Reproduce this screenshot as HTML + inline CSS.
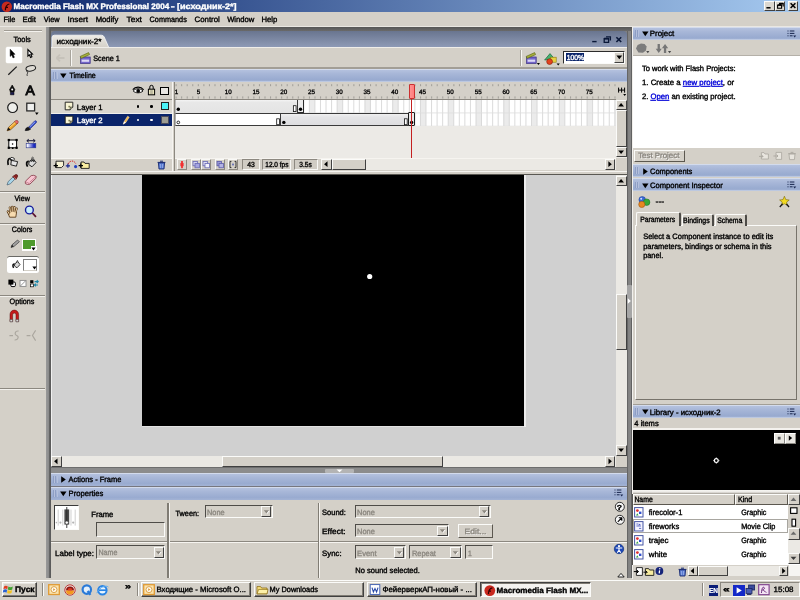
<!DOCTYPE html>
<html><head><meta charset="utf-8"><title>Macromedia Flash MX Professional 2004</title>
<style>
html,body{margin:0;padding:0;background:#d4d0c8;overflow:hidden}
#s{will-change:transform;position:relative;width:800px;height:600px;overflow:hidden;background:#d4d0c8;font-family:"Liberation Sans",sans-serif}
#s div,#s svg{position:absolute;display:block}
#s svg{overflow:visible}
#tx text{white-space:pre;text-rendering:geometricPrecision}
#tx .lk{fill:#0000d8;stroke:#0000d8;text-decoration:underline}
</style></head><body><div id="s">
<div style="left:0px;top:0px;width:800px;height:12.3px;background:linear-gradient(90deg,#0a246a 0%,#a6caf0 100%)"></div>
<svg style="left:1px;top:0.6px" width="12" height="12" viewBox="0 0 12 12"><circle cx="5.8" cy="5.8" r="5.2" fill="#c62a1e"/><path d="M4.4 9.2 C4.4 5.6 5.4 3.6 8.4 3 M4.2 6.3 H7" stroke="#2a0000" stroke-width="1.2" fill="none"/></svg>
<div style="left:764.2px;top:1.4px;width:10.4px;height:9.2px;background:#dcd8d0;border:1px solid #fbfbf9;border-right-color:#404040;border-bottom-color:#404040;box-sizing:border-box;"></div>
<div style="left:774.6px;top:1.4px;width:10.8px;height:9.2px;background:#dcd8d0;border:1px solid #fbfbf9;border-right-color:#404040;border-bottom-color:#404040;box-sizing:border-box;"></div>
<div style="left:788px;top:1.4px;width:10.4px;height:9.2px;background:#dcd8d0;border:1px solid #fbfbf9;border-right-color:#404040;border-bottom-color:#404040;box-sizing:border-box;"></div>
<svg style="left:764.2px;top:1.4px" width="10.4" height="9.2" viewBox="0 0 10.4 9.2"><path d="M2.4 6.8 H6.6" stroke="#000" stroke-width="1.5"/></svg>
<svg style="left:774.6px;top:1.4px" width="10.8" height="9.2" viewBox="0 0 10.8 9.2"><path d="M4.2 2.6 H8.2 V5.6 M2.6 4.2 H6.6 V7.2 H2.6 Z" stroke="#000" stroke-width="1.1" fill="none"/><path d="M4.2 2.4 H8.2 M2.6 4 H6.6" stroke="#000" stroke-width="1.5"/></svg>
<svg style="left:788px;top:1.4px" width="10.4" height="9.2" viewBox="0 0 10.4 9.2"><path d="M2.6 2.2 L7.4 7 M7.4 2.2 L2.6 7" stroke="#000" stroke-width="1.5"/></svg>
<div style="left:0px;top:12.3px;width:800px;height:14.3px;background:#d4d0c8"></div>
<div style="left:0px;top:26px;width:800px;height:1px;background:#e9e7e2"></div>
<div style="left:0px;top:27px;width:46px;height:553px;background:#d4d0c8"></div>
<div style="left:4px;top:30px;width:38px;height:1px;background:#a09c94"></div>
<div style="left:4px;top:31px;width:38px;height:1px;background:#f4f2ee"></div>
<div style="left:5.7px;top:46.7px;width:16.2px;height:16px;background:#fff;border-radius:1.5px;box-shadow:0 0 0 0.5px #e8e6e0"></div>
<svg style="left:0px;top:0px" width="46" height="200" viewBox="0 0 46 200"><path d="M10.2 49.3 V56.4 L11.8 55 L13 57.9 L14.4 57.3 L13.2 54.5 L15 54.3 Z" fill="#000" stroke="#000" stroke-width="0.5" /><path d="M27.9 49.5 V56 L29.4 54.8 L30.6 57.4 L31.9 56.8 L30.8 54.2 L32.5 54 Z" fill="#f4f4f4" stroke="#000" stroke-width="1.1" /><path d="M8.3 74.8 L16.7 66.6" fill="none" stroke="#1c1c1c" stroke-width="1.2" /><ellipse cx="30.8" cy="68.4" rx="4.9" ry="2.6" transform="rotate(-12 30.8 68.4)" fill="#dedbd4" stroke="#222" stroke-width="1"/><path d="M27.2 70.2 C26 71.6 28.6 72.4 27.4 73.6 C26.6 74.4 27.6 75.2 27 76" fill="none" stroke="#222" stroke-width="0.9" /><path d="M12.2 85 L9.6 89.6 L10.4 92 H14 L14.8 89.6 Z" fill="#111" stroke="#000" stroke-width="0.6" /><path d="M10.4 92.2 H14 V94.8 H10.4 Z" fill="#1a1a50" stroke="#000" stroke-width="0.5" /><circle cx="12.2" cy="89.4" r="1" fill="#fff"/><circle cx="12.6" cy="107.6" r="4.9" fill="#eeeeea" stroke="#1a1a1a" stroke-width="1.2"/><rect x="26.8" y="103.2" width="7.8" height="7.7" fill="#f0f0ee" stroke="#2a2a2a" stroke-width="1.3"/><path d="M35 112.6 H38.6 L36.8 114.9 Z" fill="#000" stroke="none" stroke-width="1" /><path d="M7 130.8 L8.4 127.4 L15.4 121 L17.8 123.2 L10.6 129.8 Z" fill="#f2a428" stroke="#6a4210" stroke-width="0.6" /><path d="M7 130.8 L8.4 127.4 L10.6 129.8 Z" fill="#1a1a1a" stroke="none" stroke-width="1" /><path d="M14.6 121.8 L15.8 120.6 Q17 119.8 18 121 Q18.8 122 17.9 123.1 L17 124 Z" fill="#e86a6a" stroke="#7a2a2a" stroke-width="0.5" /><path d="M9.6 127.4 L15.4 122.4" fill="none" stroke="#fbe2a0" stroke-width="0.8" /><path d="M28.6 127.2 L34.6 121 Q35.6 120.2 36.4 121.2 Q37 122 36.2 122.8 L30.4 128.6 Z" fill="#3650d0" stroke="#16227a" stroke-width="0.6" /><path d="M25 130.6 Q25.4 127.8 28 127 L30.6 129.2 Q29 131 25 130.6 Z" fill="#16161c" stroke="#000" stroke-width="0.4" /><path d="M30 126.6 L35 121.8" fill="none" stroke="#c4d0ff" stroke-width="0.7" /><rect x="8.8" y="140" width="7.8" height="7.8" fill="#fff" stroke="#000" stroke-width="1"/><rect x="7.700000000000001" y="138.9" width="2.2" height="2.2" fill="#000"/><rect x="15.500000000000002" y="138.9" width="2.2" height="2.2" fill="#000"/><rect x="7.700000000000001" y="146.70000000000002" width="2.2" height="2.2" fill="#000"/><rect x="15.500000000000002" y="146.70000000000002" width="2.2" height="2.2" fill="#000"/><rect x="11.899999999999999" y="147.39999999999998" width="1.6" height="1.6" fill="#000"/><circle cx="12.6" cy="144" r="0.8" fill="#000"/><defs><linearGradient id="g1" x1="0" x2="1"><stop offset="0.1" stop-color="#fff"/><stop offset="0.8" stop-color="#1a28c0"/></linearGradient></defs><rect x="26.2" y="143.4" width="9.6" height="4.4" fill="url(#g1)" stroke="#28348c" stroke-width="0.6"/><path d="M27 140.7 H35 M28.8 139.2 L26.8 140.7 L28.8 142.2 M33.2 139.2 L35.2 140.7 L33.2 142.2" fill="none" stroke="#1a1a3a" stroke-width="1" /><path d="M11.4 160.4 L17.6 161.6 L16.4 166.2 L10.8 164.8 Z" fill="#e6e6e6" stroke="#111" stroke-width="0.9" /><path d="M11.6 160.6 C9.6 156.4 7 159 8.2 165" fill="none" stroke="#0a0a0a" stroke-width="1.6" /><ellipse cx="12.4" cy="158.8" rx="2.2" ry="1.2" transform="rotate(15 12.4 158.8)" fill="#fff" stroke="#111" stroke-width="0.8"/><path d="M29.4 161.2 L33.2 158.6 L36 162.6 L32 166.8 L28.6 164.4 Z" fill="#dcdcdc" stroke="#111" stroke-width="0.9" /><path d="M28.8 161.6 C26.4 161 26 164 27.6 166.6" fill="none" stroke="#0a0a0a" stroke-width="1.8" /><path d="M31.6 159.4 C31.4 157 33 156.2 33.6 158.2" fill="none" stroke="#444" stroke-width="0.8" /><path d="M30.6 161.6 L33 160.2 L34.2 162" fill="none" stroke="#222" stroke-width="1.2" /><path d="M7 185 L8.2 181.6 L13 177 L15 179 L10.4 183.8 Z" fill="#a8d4e8" stroke="#4a6272" stroke-width="0.7" /><path d="M12.6 176.6 L15.6 174.6 Q17.4 174.2 17.8 176 L16 179.4 Z" fill="#8a2020" stroke="#4a0c0c" stroke-width="0.6" /><path d="M13.6 176.8 L16.2 179.2" fill="none" stroke="#d88" stroke-width="0.7" /><path d="M25.3 181.4 L31.2 175.6 Q33.8 174.6 36.2 176.4 L35.8 178.4 L29.8 184.2 Q27 185 25.4 183.6 Z" fill="#f8c4d0" stroke="#8a4450" stroke-width="0.9" /><path d="M25.4 181.6 Q27.6 182.4 29.8 184 M29.8 182.2 L35.8 176.6" fill="none" stroke="#b06a7a" stroke-width="0.7" /></svg>
<div style="left:0px;top:191.4px;width:45px;height:1px;background:#8c8880"></div>
<div style="left:0px;top:192.4px;width:45px;height:1px;background:#f2f0ec"></div>
<svg style="left:0px;top:200px" width="46" height="150" viewBox="0 200 46 150"><path d="M9.6 217.2 Q8.2 214.6 8.6 212.4 L10.2 210 H15.6 L16.6 212 L15.8 217.2 Z" fill="#f8dcb0" stroke="#4a2a08" stroke-width="0.8" /><path d="M10.4 211.4 L9.8 207.6" fill="none" stroke="#4a2a08" stroke-width="2.2" stroke-linecap="round"/><path d="M12.2 211 L12.2 206.8" fill="none" stroke="#4a2a08" stroke-width="2.2" stroke-linecap="round"/><path d="M14 211 L14.4 207.2" fill="none" stroke="#4a2a08" stroke-width="2.2" stroke-linecap="round"/><path d="M15.6 211.6 L16.6 208.6" fill="none" stroke="#4a2a08" stroke-width="2.2" stroke-linecap="round"/><path d="M9 213.6 L7.8 211.4" fill="none" stroke="#4a2a08" stroke-width="2.2" stroke-linecap="round"/><path d="M10.4 212 L9.8 207.6" fill="none" stroke="#f8dcb0" stroke-width="1.0" stroke-linecap="round"/><path d="M12.2 212 L12.2 206.8" fill="none" stroke="#f8dcb0" stroke-width="1.0" stroke-linecap="round"/><path d="M14 212 L14.4 207.2" fill="none" stroke="#f8dcb0" stroke-width="1.0" stroke-linecap="round"/><path d="M15.6 212.4 L16.6 208.6" fill="none" stroke="#f8dcb0" stroke-width="1.0" stroke-linecap="round"/><path d="M9.4 214.2 L7.8 211.4" fill="none" stroke="#f8dcb0" stroke-width="1.0" stroke-linecap="round"/><circle cx="29.4" cy="210" r="3.9" fill="#c8ecf8" stroke="#181c9c" stroke-width="1.4"/><path d="M32.4 213 L36 216.8" fill="none" stroke="#5a1430" stroke-width="1.8" /><path d="M11 247.4 L12 244.8 L17.6 240 L19.4 241.8 L13.8 246.6 Z" fill="#a2a2a2" stroke="#3a3a3a" stroke-width="0.7" /><path d="M11 247.4 L12 244.8 L13.8 246.6 Z" fill="#222" stroke="none" stroke-width="1" /><rect x="10.8" y="282" width="4.6" height="4.6" rx="1.2" fill="#fff" stroke="#000" stroke-width="1"/><rect x="8.4" y="279.6" width="5" height="5" fill="#000"/><rect x="20" y="280.4" width="6" height="6" fill="#fff" stroke="#8a8a8a" stroke-width="0.9"/><path d="M25.6 280.8 L20.4 286" fill="none" stroke="#8a8a8a" stroke-width="0.9" /><rect x="30.2" y="280.2" width="3.2" height="3" fill="#000"/><rect x="30.4" y="284" width="3" height="2.8" fill="#fff" stroke="#000" stroke-width="0.7"/><path d="M34.6 281.6 H38 M34.6 285 H38 M36.8 280.2 L38.2 281.6 L36.8 283 M35.8 283.6 L34.4 285 L35.8 286.4" fill="none" stroke="#1a86a8" stroke-width="1.1" /><path d="M10 321.6 V314.4 A4.3 4.3 0 0 1 18.6 314.4 V321.6 H16 V314.8 A1.7 1.7 0 0 0 12.6 314.8 V321.6 Z" fill="#c41a1a" stroke="#5a0a0a" stroke-width="0.5" /><path d="M10 319.4 H12.6 V321.8 H10 Z M16 319.4 H18.6 V321.8 H16 Z" fill="#d8d8d8" stroke="#3a3a3a" stroke-width="0.5" /><path d="M9.4 335.6 H13 M18.6 331 C14.6 330.6 14.4 334.6 16.6 335.4 C19.2 336.4 18.4 340.2 14.6 340" fill="none" stroke="#aaa69e" stroke-width="1.1" /><path d="M26.6 335.6 H30.4 M35.6 330.4 L32.4 335.4 L35.6 340.6" fill="none" stroke="#aaa69e" stroke-width="1.1" /></svg>
<div style="left:0px;top:222.6px;width:45px;height:1px;background:#8c8880"></div>
<div style="left:0px;top:223.6px;width:45px;height:1px;background:#f2f0ec"></div>
<div style="left:22.2px;top:238.5px;width:14.3px;height:12px;background:#fff"></div>
<div style="left:23.4px;top:239.7px;width:11.9px;height:9.6px;background:#4e9a2c"></div>
<div style="left:31px;top:246.4px;width:5.5px;height:4.1px;background:#fff"></div>
<svg style="left:31.4px;top:246.8px" width="5" height="4" viewBox="0 0 5 4"><path d="M0.4 0.6 H4.6 L2.5 3.4 Z" fill="#000"/></svg>
<div style="left:6.5px;top:256.3px;width:32.5px;height:16.7px;background:#fff;border-radius:2.5px;border-top:1px solid #6a6a66;box-sizing:border-box"></div>
<svg style="left:9px;top:258px" width="14" height="14" viewBox="0 0 14 14"><path d="M6 5.6 L8.8 3.6 L11 6.6 L8 9.8 L5.4 8 Z" fill="#d8d8d8" stroke="#111" stroke-width="0.8"/><path d="M5.6 6 C3.8 5.6 3.4 7.8 4.6 9.8" stroke="#0a0a0a" stroke-width="1.5" fill="none"/><path d="M7.6 4.2 C7.4 2.4 8.8 2 9.2 3.4" stroke="#333" stroke-width="0.8" fill="none"/></svg>
<div style="left:22.5px;top:259px;width:14.3px;height:11.8px;background:#fff;border:1px solid #808080;border-bottom-color:#d4d0c8;box-sizing:border-box"></div>
<svg style="left:31.6px;top:266.4px" width="5" height="4" viewBox="0 0 5 4"><path d="M0.4 0.6 H4.6 L2.5 3.4 Z" fill="#000"/></svg>
<div style="left:0px;top:295px;width:45px;height:1px;background:#8c8880"></div>
<div style="left:0px;top:296px;width:45px;height:1px;background:#f2f0ec"></div>
<div style="left:0px;top:388px;width:45px;height:1px;background:#8c8880"></div>
<div style="left:0px;top:389px;width:45px;height:1px;background:#f2f0ec"></div>
<div style="left:45.8px;top:26.6px;width:586.4px;height:551px;background:#808080"></div>
<div style="left:45.8px;top:26.6px;width:5.2px;height:551px;background:linear-gradient(90deg,#9a9a9a 0%,#8c8c8c 50%,#606060 72%,#585858 100%)"></div>
<div style="left:50.8px;top:26.6px;width:581.4px;height:4.4px;background:linear-gradient(#555 0%,#6a6a6a 100%)"></div>
<div style="left:626.6px;top:30.8px;width:5.6px;height:546.8px;background:linear-gradient(90deg,#4a4a4a 0%,#808080 20%,#868686 80%,#3e3e3e 100%)"></div>
<div style="left:50.8px;top:30.8px;width:576.4px;height:17px;background:linear-gradient(#69758f,#909cb8);border-radius:4px 4px 0 0"></div>
<svg style="left:51px;top:34px" width="62" height="14" viewBox="0 0 62 14"><defs><linearGradient id="tg" x1="0" x2="0" y1="0" y2="1"><stop offset="0" stop-color="#efede8"/><stop offset="0.5" stop-color="#dedbd4"/><stop offset="1" stop-color="#d4d0c8"/></linearGradient></defs><path d="M1 14 V3.6 Q1 1.2 3.4 1.2 H50.4 Q52.4 1.2 53.2 3 L58 14 Z" fill="url(#tg)" stroke="#f8f8f6" stroke-width="0.8"/></svg>
<svg style="left:590px;top:34px" width="40" height="12" viewBox="0 0 40 12"><path d="M2.2 7.6 H6.6" stroke="#0a1838" stroke-width="1.4"/><path d="M16 2.8 H20.4 V6.4 M14.2 4.6 H18.6 V8.4 H14.2 Z" stroke="#0a1838" stroke-width="1.3" fill="none"/><path d="M14.2 4.6 H18.6" stroke="#0a1838" stroke-width="1.8"/><path d="M26.4 3.2 L31.2 8 M31.2 3.2 L26.4 8" stroke="#0a1838" stroke-width="1.6"/></svg>
<div style="left:50.8px;top:47.2px;width:576.4px;height:21px;background:#d4d0c8"></div>
<div style="left:50.8px;top:47.2px;width:576.4px;height:0.8px;background:#efede9"></div>
<div style="left:50.8px;top:67.4px;width:576.4px;height:1.2px;background:#a29e96"></div>
<svg style="left:55px;top:53px" width="11" height="10" viewBox="0 0 11 10"><path d="M1.5 5 H9.5 M1.5 5 L5 1.6 M1.5 5 L5 8.4" stroke="#c6c2ba" stroke-width="1.8" fill="none"/></svg>
<div style="left:70.4px;top:50px;width:1px;height:16.4px;background:#a8a49c"></div>
<div style="left:71.4px;top:50px;width:1px;height:16.4px;background:#f8f7f4"></div>
<svg style="left:79.4px;top:51.2px" width="13" height="14" viewBox="0 0 13 14"><rect x="1.6" y="6" width="9.6" height="6.4" fill="#7466cc" stroke="#382c82" stroke-width="0.7"/><rect x="2.6" y="8.6" width="7.6" height="2.2" fill="#dcd8f6"/><path d="M1.2 5.4 L9.6 1.6 L10.6 3.6 L2.2 7.4 Z" fill="#a6ae3c" stroke="#56600e" stroke-width="0.6"/></svg>
<div style="left:519.8px;top:50px;width:1px;height:16.4px;background:#a8a49c"></div>
<div style="left:520.8px;top:50px;width:1px;height:16.4px;background:#f8f7f4"></div>
<svg style="left:525.4px;top:51px" width="16" height="15" viewBox="0 0 16 15"><rect x="1.6" y="6" width="9.6" height="6.4" fill="#7466cc" stroke="#382c82" stroke-width="0.7"/><rect x="2.6" y="8.6" width="7.6" height="2.2" fill="#dcd8f6"/><path d="M1.2 5.4 L9.6 1.6 L10.6 3.6 L2.2 7.4 Z" fill="#a6ae3c" stroke="#56600e" stroke-width="0.6"/><path d="M11.8 12 H15 L13.4 14 Z" fill="#000"/></svg>
<svg style="left:543.4px;top:51px" width="17" height="15" viewBox="0 0 17 15"><path d="M1.6 9 L7 2.6 L11.6 8 Z" fill="#46b070" stroke="#1a6a3a" stroke-width="0.7"/><rect x="7.4" y="6.2" width="5.8" height="5" fill="#e8d242" stroke="#8a7a10" stroke-width="0.6"/><circle cx="6.6" cy="10.6" r="2.9" fill="#e2421e" stroke="#801a0a" stroke-width="0.6"/><path d="M13.6 12.4 H16.8 L15.2 14.4 Z" fill="#000"/></svg>
<div style="left:563px;top:51px;width:62px;height:13.2px;background:#fff;border:1.6px solid #2c2c2c;border-right-color:#fbfbf9;border-bottom-color:#fbfbf9;box-sizing:border-box"></div>
<div style="left:566.4px;top:53.2px;width:17.8px;height:8.2px;background:#0a246a"></div>
<div style="left:614px;top:52.4px;width:10px;height:10.8px;background:#d4d0c8;border:1px solid #fbfbf9;border-right-color:#404040;border-bottom-color:#404040;box-sizing:border-box;"></div>
<svg style="left:615.6px;top:55.4px" width="7" height="5" viewBox="0 0 7 5"><path d="M0.4 0.6 H6.2 L3.3 4.2 Z" fill="#000"/></svg>
<div style="left:50.8px;top:68.7px;width:576.4px;height:13.3px;background:linear-gradient(#b7c4e0 0%,#a8b7d8 35%,#99abd0 80%,#a3b3d5 100%)"></div>
<div style="left:50.8px;top:68.7px;width:576.4px;height:0.9px;background:#d3dbec"></div>
<div style="left:50.8px;top:81.1px;width:576.4px;height:0.9px;background:#bcc8e0"></div>
<div style="left:52.8px;top:71.8px;width:1.1px;height:7.0px;background:#8e9ec4"></div>
<div style="left:53.9px;top:71.8px;width:1px;height:7.0px;background:#b4c0dc"></div>
<div style="left:55.4px;top:71.8px;width:1.1px;height:7.0px;background:#8e9ec4"></div>
<div style="left:56.5px;top:71.8px;width:1px;height:7.0px;background:#b4c0dc"></div>
<svg style="left:59.8px;top:72.8px" width="8" height="7" viewBox="0 0 8 7"><path d="M0.1 0.6 H6.5 L3.3 5.2 Z" fill="#000"/></svg>
<div style="left:50.8px;top:81.8px;width:576.4px;height:93.4px;background:#d4d0c8"></div>
<div style="left:50.8px;top:98.8px;width:121.4px;height:1px;background:#8c8880"></div>
<svg style="left:132px;top:85px" width="13" height="11" viewBox="0 0 13 11"><path d="M1.2 6 C3.6 3 8.4 3 11 6 C8.4 8.4 3.6 8.4 1.2 6 Z" fill="#fff" stroke="#000" stroke-width="0.9"/><circle cx="6.2" cy="5.9" r="1.9" fill="#000"/><path d="M0.8 4.6 C3.4 1.4 8.8 1.4 11.6 4.8" stroke="#000" stroke-width="1.3" fill="none"/></svg>
<svg style="left:147px;top:84px" width="9" height="12" viewBox="0 0 9 12"><rect x="1.4" y="5.2" width="6.2" height="5.6" fill="#e8e4c0" stroke="#000" stroke-width="1"/><path d="M2.8 5 V3 A1.7 1.7 0 0 1 6.2 3 V5" stroke="#000" stroke-width="1" fill="none"/><path d="M3.2 7 H5.8 M3.2 9 H5.8" stroke="#555" stroke-width="0.6"/></svg>
<div style="left:160.4px;top:86.6px;width:8.4px;height:8px;background:#e8e6e2;border:1.3px solid #000;box-sizing:border-box"></div>
<div style="left:50.8px;top:99.8px;width:121.4px;height:13.2px;background:#dad7d0"></div>
<div style="left:50.8px;top:113px;width:121.4px;height:0.8px;background:#f0efec"></div>
<div style="left:50.8px;top:113.8px;width:121.4px;height:12.4px;background:#0a246a"></div>
<svg style="left:64px;top:101.2px" width="10" height="10" viewBox="0 0 10 10"><path d="M1.2 1.2 H8.8 V6.2 L6.2 8.8 H1.2 Z" fill="#f8f4d4" stroke="#1a1a1a" stroke-width="0.9"/><path d="M8.8 6.2 H6.2 V8.8" fill="#d8d4a8" stroke="#1a1a1a" stroke-width="0.7"/><rect x="4.4" y="4.8" width="1.8" height="1.6" fill="#7a7a50"/></svg>
<svg style="left:64px;top:114.6px" width="10" height="10" viewBox="0 0 10 10"><path d="M1.2 1.2 H8.8 V6.2 L6.2 8.8 H1.2 Z" fill="#f8f4d4" stroke="#1a1a1a" stroke-width="0.9"/><path d="M8.8 6.2 H6.2 V8.8" fill="#d8d4a8" stroke="#1a1a1a" stroke-width="0.7"/><rect x="4.4" y="4.8" width="1.8" height="1.6" fill="#7a7a50"/></svg>
<svg style="left:122px;top:114.6px" width="8" height="10" viewBox="0 0 8 10"><path d="M1.2 9.2 L2.2 6.4 L5.6 1.2 L7.2 2.2 L3.8 7.6 Z" fill="#f4b848" stroke="#fce8c0" stroke-width="0.5"/><path d="M1.2 9.2 L2.2 6.4 L3.8 7.6 Z" fill="#fff"/></svg>
<div style="left:136.9px;top:105.4px;width:2.6px;height:2.6px;background:#000;border-radius:50%"></div>
<div style="left:136.9px;top:118.6px;width:2.6px;height:2.6px;background:#fff;border-radius:50%"></div>
<div style="left:150.1px;top:105.4px;width:2.6px;height:2.6px;background:#000;border-radius:50%"></div>
<div style="left:150.1px;top:118.6px;width:2.6px;height:2.6px;background:#fff;border-radius:50%"></div>
<div style="left:160.6px;top:102.4px;width:8px;height:8px;background:#4cf2f6;border:1px solid #222;box-sizing:border-box"></div>
<div style="left:160.6px;top:115.8px;width:8px;height:8px;background:#9c9c92;border:1px solid #4a4a5a;box-sizing:border-box"></div>
<div style="left:50.8px;top:126.2px;width:121.4px;height:32px;background:#eceae6"></div>
<div style="left:50.8px;top:158px;width:121.4px;height:13px;background:#d4d0c8"></div>
<div style="left:50.8px;top:158px;width:121.4px;height:0.8px;background:#f6f4f0"></div>
<svg style="left:53px;top:159.2px" width="12" height="11" viewBox="0 0 12 11"><path d="M3 2.2 H10.6 V6.4 L8.4 8.6 H3 Z" fill="#f8f4d4" stroke="#1a1a1a" stroke-width="0.9"/><path d="M0.6 6.6 H5 M2.8 4.4 V8.8" stroke="#000" stroke-width="1.2"/></svg>
<svg style="left:65px;top:159.2px" width="13" height="11" viewBox="0 0 13 11"><path d="M3 5 C5 1 9 1 11 5" stroke="#d42020" stroke-width="1" stroke-dasharray="1.5 1" fill="none"/><circle cx="10.6" cy="7.6" r="1.6" fill="#2040c0"/><path d="M0.8 6.8 H5 M2.9 4.8 V8.8" stroke="#1a2a90" stroke-width="1.2"/></svg>
<svg style="left:78px;top:159.2px" width="13" height="11" viewBox="0 0 13 11"><path d="M3 3 H6 L7 4.4 H11.2 V9.4 H3 Z" fill="#f8eca0" stroke="#1a1a1a" stroke-width="0.9"/><path d="M0.6 6.6 H5 M2.8 4.4 V8.8" stroke="#000" stroke-width="1.2"/></svg>
<svg style="left:156px;top:159px" width="11" height="11" viewBox="0 0 11 11"><path d="M2.4 3.8 H8.6 L8 10 H3 Z" fill="#5a7cd2" stroke="#1a2a70" stroke-width="0.9"/><path d="M1.6 3.4 H9.4 M4 2.2 H7" stroke="#1a2a70" stroke-width="1"/><path d="M4.4 5 V9 M6.6 5 V9" stroke="#a8bcf0" stroke-width="0.7"/></svg>
<div style="left:172.2px;top:81.8px;width:1px;height:89.4px;background:#f6f4f0"></div>
<div style="left:174.4px;top:81.8px;width:1px;height:89.4px;background:#8c8880"></div>
<svg style="left:175.6px;top:82px" width="441" height="17" viewBox="0 0 441 17"><path d="M0.1 2.2 V4.2 M0.1 14.4 V16.6 M5.66 2.2 V4.2 M5.66 14.4 V16.6 M11.21 2.2 V4.2 M11.21 14.4 V16.6 M16.77 2.2 V4.2 M16.77 14.4 V16.6 M22.32 2.2 V4.2 M22.32 14.4 V16.6 M27.88 2.2 V4.2 M27.88 14.4 V16.6 M33.43 2.2 V4.2 M33.43 14.4 V16.6 M38.99 2.2 V4.2 M38.99 14.4 V16.6 M44.54 2.2 V4.2 M44.54 14.4 V16.6 M50.1 2.2 V4.2 M50.1 14.4 V16.6 M55.66 2.2 V4.2 M55.66 14.4 V16.6 M61.21 2.2 V4.2 M61.21 14.4 V16.6 M66.77 2.2 V4.2 M66.77 14.4 V16.6 M72.32 2.2 V4.2 M72.32 14.4 V16.6 M77.88 2.2 V4.2 M77.88 14.4 V16.6 M83.43 2.2 V4.2 M83.43 14.4 V16.6 M88.99 2.2 V4.2 M88.99 14.4 V16.6 M94.55 2.2 V4.2 M94.55 14.4 V16.6 M100.1 2.2 V4.2 M100.1 14.4 V16.6 M105.66 2.2 V4.2 M105.66 14.4 V16.6 M111.21 2.2 V4.2 M111.21 14.4 V16.6 M116.77 2.2 V4.2 M116.77 14.4 V16.6 M122.32 2.2 V4.2 M122.32 14.4 V16.6 M127.88 2.2 V4.2 M127.88 14.4 V16.6 M133.43 2.2 V4.2 M133.43 14.4 V16.6 M138.99 2.2 V4.2 M138.99 14.4 V16.6 M144.55 2.2 V4.2 M144.55 14.4 V16.6 M150.1 2.2 V4.2 M150.1 14.4 V16.6 M155.66 2.2 V4.2 M155.66 14.4 V16.6 M161.21 2.2 V4.2 M161.21 14.4 V16.6 M166.77 2.2 V4.2 M166.77 14.4 V16.6 M172.32 2.2 V4.2 M172.32 14.4 V16.6 M177.88 2.2 V4.2 M177.88 14.4 V16.6 M183.43 2.2 V4.2 M183.43 14.4 V16.6 M188.99 2.2 V4.2 M188.99 14.4 V16.6 M194.55 2.2 V4.2 M194.55 14.4 V16.6 M200.1 2.2 V4.2 M200.1 14.4 V16.6 M205.66 2.2 V4.2 M205.66 14.4 V16.6 M211.21 2.2 V4.2 M211.21 14.4 V16.6 M216.77 2.2 V4.2 M216.77 14.4 V16.6 M222.32 2.2 V4.2 M222.32 14.4 V16.6 M227.88 2.2 V4.2 M227.88 14.4 V16.6 M233.44 2.2 V4.2 M233.44 14.4 V16.6 M238.99 2.2 V4.2 M238.99 14.4 V16.6 M244.55 2.2 V4.2 M244.55 14.4 V16.6 M250.1 2.2 V4.2 M250.1 14.4 V16.6 M255.66 2.2 V4.2 M255.66 14.4 V16.6 M261.21 2.2 V4.2 M261.21 14.4 V16.6 M266.77 2.2 V4.2 M266.77 14.4 V16.6 M272.32 2.2 V4.2 M272.32 14.4 V16.6 M277.88 2.2 V4.2 M277.88 14.4 V16.6 M283.44 2.2 V4.2 M283.44 14.4 V16.6 M288.99 2.2 V4.2 M288.99 14.4 V16.6 M294.55 2.2 V4.2 M294.55 14.4 V16.6 M300.1 2.2 V4.2 M300.1 14.4 V16.6 M305.66 2.2 V4.2 M305.66 14.4 V16.6 M311.21 2.2 V4.2 M311.21 14.4 V16.6 M316.77 2.2 V4.2 M316.77 14.4 V16.6 M322.32 2.2 V4.2 M322.32 14.4 V16.6 M327.88 2.2 V4.2 M327.88 14.4 V16.6 M333.44 2.2 V4.2 M333.44 14.4 V16.6 M338.99 2.2 V4.2 M338.99 14.4 V16.6 M344.55 2.2 V4.2 M344.55 14.4 V16.6 M350.1 2.2 V4.2 M350.1 14.4 V16.6 M355.66 2.2 V4.2 M355.66 14.4 V16.6 M361.21 2.2 V4.2 M361.21 14.4 V16.6 M366.77 2.2 V4.2 M366.77 14.4 V16.6 M372.33 2.2 V4.2 M372.33 14.4 V16.6 M377.88 2.2 V4.2 M377.88 14.4 V16.6 M383.44 2.2 V4.2 M383.44 14.4 V16.6 M388.99 2.2 V4.2 M388.99 14.4 V16.6 M394.55 2.2 V4.2 M394.55 14.4 V16.6 M400.1 2.2 V4.2 M400.1 14.4 V16.6 M405.66 2.2 V4.2 M405.66 14.4 V16.6 M411.21 2.2 V4.2 M411.21 14.4 V16.6 M416.77 2.2 V4.2 M416.77 14.4 V16.6 M422.33 2.2 V4.2 M422.33 14.4 V16.6 M427.88 2.2 V4.2 M427.88 14.4 V16.6 M433.44 2.2 V4.2 M433.44 14.4 V16.6 M438.99 2.2 V4.2 M438.99 14.4 V16.6 " stroke="#8a8884" stroke-width="0.7" fill="none"/></svg>
<div style="left:175.4px;top:98.8px;width:441px;height:1px;background:#8c8880"></div>
<div style="left:175.4px;top:99.8px;width:441px;height:26.4px;background:#fff"></div>
<svg style="left:175.6px;top:99.8px" width="440.8" height="26.4" viewBox="0 0 440.8 26.4"><rect x="22.22" y="0" width="5.56" height="26.4" fill="#ebebeb"/><rect x="50.0" y="0" width="5.56" height="26.4" fill="#ebebeb"/><rect x="77.78" y="0" width="5.56" height="26.4" fill="#ebebeb"/><rect x="105.56" y="0" width="5.56" height="26.4" fill="#ebebeb"/><rect x="133.33" y="0" width="5.56" height="26.4" fill="#ebebeb"/><rect x="161.11" y="0" width="5.56" height="26.4" fill="#ebebeb"/><rect x="188.89" y="0" width="5.56" height="26.4" fill="#ebebeb"/><rect x="216.67" y="0" width="5.56" height="26.4" fill="#ebebeb"/><rect x="244.45" y="0" width="5.56" height="26.4" fill="#ebebeb"/><rect x="272.22" y="0" width="5.56" height="26.4" fill="#ebebeb"/><rect x="300.0" y="0" width="5.56" height="26.4" fill="#ebebeb"/><rect x="327.78" y="0" width="5.56" height="26.4" fill="#ebebeb"/><rect x="355.56" y="0" width="5.56" height="26.4" fill="#ebebeb"/><rect x="383.34" y="0" width="5.56" height="26.4" fill="#ebebeb"/><rect x="411.11" y="0" width="5.56" height="26.4" fill="#ebebeb"/><rect x="438.89" y="0" width="5.56" height="26.4" fill="#ebebeb"/><path d="M0.0 0 V26.4 M5.56 0 V26.4 M11.11 0 V26.4 M16.67 0 V26.4 M22.22 0 V26.4 M27.78 0 V26.4 M33.33 0 V26.4 M38.89 0 V26.4 M44.44 0 V26.4 M50.0 0 V26.4 M55.56 0 V26.4 M61.11 0 V26.4 M66.67 0 V26.4 M72.22 0 V26.4 M77.78 0 V26.4 M83.33 0 V26.4 M88.89 0 V26.4 M94.45 0 V26.4 M100.0 0 V26.4 M105.56 0 V26.4 M111.11 0 V26.4 M116.67 0 V26.4 M122.22 0 V26.4 M127.78 0 V26.4 M133.33 0 V26.4 M138.89 0 V26.4 M144.45 0 V26.4 M150.0 0 V26.4 M155.56 0 V26.4 M161.11 0 V26.4 M166.67 0 V26.4 M172.22 0 V26.4 M177.78 0 V26.4 M183.33 0 V26.4 M188.89 0 V26.4 M194.45 0 V26.4 M200.0 0 V26.4 M205.56 0 V26.4 M211.11 0 V26.4 M216.67 0 V26.4 M222.22 0 V26.4 M227.78 0 V26.4 M233.34 0 V26.4 M238.89 0 V26.4 M244.45 0 V26.4 M250.0 0 V26.4 M255.56 0 V26.4 M261.11 0 V26.4 M266.67 0 V26.4 M272.22 0 V26.4 M277.78 0 V26.4 M283.34 0 V26.4 M288.89 0 V26.4 M294.45 0 V26.4 M300.0 0 V26.4 M305.56 0 V26.4 M311.11 0 V26.4 M316.67 0 V26.4 M322.22 0 V26.4 M327.78 0 V26.4 M333.34 0 V26.4 M338.89 0 V26.4 M344.45 0 V26.4 M350.0 0 V26.4 M355.56 0 V26.4 M361.11 0 V26.4 M366.67 0 V26.4 M372.23 0 V26.4 M377.78 0 V26.4 M383.34 0 V26.4 M388.89 0 V26.4 M394.45 0 V26.4 M400.0 0 V26.4 M405.56 0 V26.4 M411.11 0 V26.4 M416.67 0 V26.4 M422.23 0 V26.4 M427.78 0 V26.4 M433.34 0 V26.4 M438.89 0 V26.4 " stroke="#d2d2d2" stroke-width="0.8" fill="none"/><path d="M0 12.9 H441 M0 26.2 H441" stroke="#dedede" stroke-width="0.8"/></svg>
<div style="left:175.2px;top:99.8px;width:122.62px;height:13px;background:linear-gradient(#f4f4f4 0%,#e8e8e8 18%,#e4e4e4 100%);box-sizing:border-box;border-left:0.9px solid #b8b8b8;border-right:0.9px solid #3a3a3a"></div>
<div style="left:297.82px;top:99.8px;width:5.76px;height:13.4px;background:#ececec;border-right:0.9px solid #2a2a2a;border-bottom:0.9px solid #2a2a2a;box-sizing:border-box"></div>
<div style="left:175.2px;top:112.5px;width:105.96px;height:13.6px;background:#fff;border:0.9px solid #3a3a3a;border-left-color:#b0b0b0;box-sizing:border-box"></div>
<div style="left:281.16px;top:112.5px;width:127.78px;height:13.6px;background:linear-gradient(#f0f0f0 0%,#e4e4e6 30%,#dedee0 100%);border:0.9px solid #3a3a3a;border-left:none;box-sizing:border-box"></div>
<div style="left:408.44px;top:112.2px;width:6.46px;height:14.1px;background:#eaeaea;border:1px solid #1a1a1a;border-radius:1px;box-sizing:border-box"></div>
<svg style="left:0px;top:0px" width="800" height="130" viewBox="0 0 800 130"><circle cx="178.3" cy="109.2" r="1.7" fill="#000"/><rect x="293.37" y="105.7" width="2.7" height="5.9" fill="#fff" stroke="#111" stroke-width="0.8"/><circle cx="300.52" cy="109.2" r="1.7" fill="#000"/><circle cx="178.3" cy="122.4" r="1.35" fill="#fff" stroke="#000" stroke-width="0.8"/><rect x="276.7" y="118.8" width="2.7" height="5.9" fill="#fff" stroke="#111" stroke-width="0.8"/><circle cx="283.86" cy="122.4" r="1.7" fill="#000"/><rect x="404.48" y="118.8" width="2.7" height="5.9" fill="#fff" stroke="#111" stroke-width="0.8"/><circle cx="411.64" cy="122.4" r="1.7" fill="#000"/></svg>
<div style="left:175.4px;top:126.3px;width:441px;height:31.7px;background:#eceae6"></div>
<div style="left:408.5px;top:84.2px;width:6.3px;height:14.8px;background:linear-gradient(90deg,#ff9090,#ff7c7c);border:0.9px solid #cc3030;border-radius:1px;box-sizing:border-box"></div>
<div style="left:411px;top:98.6px;width:1px;height:59.6px;background:#c42020"></div>
<div style="left:616.4px;top:81.8px;width:10.8px;height:89.4px;background:#d4d0c8"></div>
<svg style="left:617px;top:84.6px" width="10" height="12" viewBox="0 0 10 12"><path d="M1.6 2.6 V7.6 M4.6 2.6 V7.6 M7.6 2.6 V7.6 M1.6 5.1 H7.6" stroke="#000" stroke-width="1"/><path d="M6.2 9 H9.2 L7.7 11 Z" fill="#000"/></svg>
<div style="left:616.4px;top:99.8px;width:10.8px;height:58px;background:#ebe9e4"></div>
<div style="left:616.4px;top:99.8px;width:10.8px;height:10.6px;background:#d4d0c8;border:1px solid #fbfbf9;border-right-color:#404040;border-bottom-color:#404040;box-sizing:border-box;"></div>
<svg style="left:616.4px;top:99.8px" width="10.8" height="10.6" viewBox="0 0 10.8 10.6"><path d="M2.2000000000000006 6.5 H8.0 L5.1000000000000005 3.1 Z" fill="#000"/></svg>
<div style="left:616.4px;top:110.4px;width:10.8px;height:36.2px;background:#d4d0c8;border:1px solid #fbfbf9;border-right-color:#404040;border-bottom-color:#404040;box-sizing:border-box;"></div>
<div style="left:616.4px;top:146.6px;width:10.8px;height:10.8px;background:#d4d0c8;border:1px solid #fbfbf9;border-right-color:#404040;border-bottom-color:#404040;box-sizing:border-box;"></div>
<svg style="left:616.4px;top:146.6px" width="10.8" height="10.8" viewBox="0 0 10.8 10.8"><path d="M2.2000000000000006 3.6000000000000005 H8.0 L5.1000000000000005 7.0 Z" fill="#000"/></svg>
<div style="left:175.4px;top:158px;width:441px;height:13.2px;background:#d4d0c8"></div>
<div style="left:175.4px;top:158px;width:441px;height:0.8px;background:#f6f4f0"></div>
<div style="left:176.6px;top:159px;width:10px;height:11.2px;border:1px solid #f8f8f6;border-right-color:#8c8880;border-bottom-color:#8c8880;box-sizing:border-box"></div>
<svg style="left:176.6px;top:159px" width="10" height="11.2" viewBox="0 0 10 11.2"><rect x="4.1" y="2" width="1.8" height="7.2" fill="#f23030"/><rect x="3.4" y="4" width="3.2" height="3.2" fill="#f23030"/></svg>
<div style="left:191px;top:159px;width:10px;height:11.2px;border:1px solid #f8f8f6;border-right-color:#8c8880;border-bottom-color:#8c8880;box-sizing:border-box"></div>
<svg style="left:191px;top:159px" width="10" height="11.2" viewBox="0 0 10 11.2"><rect x="2" y="2.4" width="4.4" height="4.4" fill="#d4d4f0" stroke="#6a6ab4" stroke-width="0.8"/><rect x="4" y="4.4" width="4.4" height="4.4" fill="#a4a4e0" stroke="#6a6ab4" stroke-width="0.8"/></svg>
<div style="left:201.4px;top:159px;width:10px;height:11.2px;border:1px solid #f8f8f6;border-right-color:#8c8880;border-bottom-color:#8c8880;box-sizing:border-box"></div>
<svg style="left:201.4px;top:159px" width="10" height="11.2" viewBox="0 0 10 11.2"><rect x="2" y="2.4" width="4.4" height="4.4" fill="#e0e0f4" stroke="#6a6ab4" stroke-width="0.8"/><rect x="4" y="4.4" width="4.4" height="4.4" fill="#f4f4fc" stroke="#6a6ab4" stroke-width="0.8"/></svg>
<div style="left:215px;top:159px;width:10px;height:11.2px;border:1px solid #f8f8f6;border-right-color:#8c8880;border-bottom-color:#8c8880;box-sizing:border-box"></div>
<svg style="left:215px;top:159px" width="10" height="11.2" viewBox="0 0 10 11.2"><rect x="2" y="2.4" width="4.4" height="4.4" fill="#9c9cd8" stroke="#5a5aa8" stroke-width="0.8"/><rect x="4" y="4.4" width="4.4" height="4.4" fill="#b4b4e4" stroke="#5a5aa8" stroke-width="0.8"/></svg>
<div style="left:228px;top:159px;width:10px;height:11.2px;border:1px solid #f8f8f6;border-right-color:#8c8880;border-bottom-color:#8c8880;box-sizing:border-box"></div>
<svg style="left:228px;top:159px" width="10" height="11.2" viewBox="0 0 10 11.2"><path d="M3.4 2.4 H2 V8.6 H3.4 M6.6 2.4 H8 V8.6 H6.6" stroke="#222" stroke-width="0.9" fill="none"/><rect x="4.3" y="4.6" width="1.4" height="1.8" fill="#4050b0"/></svg>
<div style="left:242px;top:158.8px;width:17.6px;height:11.4px;background:#d0ccc4;border:1px solid #8c8880;border-right-color:#f8f8f6;border-bottom-color:#f8f8f6;box-sizing:border-box"></div>
<div style="left:262px;top:158.8px;width:29px;height:11.4px;background:#d0ccc4;border:1px solid #8c8880;border-right-color:#f8f8f6;border-bottom-color:#f8f8f6;box-sizing:border-box"></div>
<div style="left:294px;top:158.8px;width:24px;height:11.4px;background:#d0ccc4;border:1px solid #8c8880;border-right-color:#f8f8f6;border-bottom-color:#f8f8f6;box-sizing:border-box"></div>
<div style="left:321px;top:159px;width:295.4px;height:11px;background:#ebe9e4"></div>
<div style="left:321px;top:159px;width:10.6px;height:11px;background:#d4d0c8;border:1px solid #fbfbf9;border-right-color:#404040;border-bottom-color:#404040;box-sizing:border-box;"></div>
<svg style="left:321px;top:159px" width="10.6" height="11" viewBox="0 0 10.6 11"><path d="M6.5 2.3000000000000003 V8.1 L3.1 5.2 Z" fill="#000"/></svg>
<div style="left:331.6px;top:159px;width:34.6px;height:11px;background:#d4d0c8;border:1px solid #fbfbf9;border-right-color:#404040;border-bottom-color:#404040;box-sizing:border-box;"></div>
<div style="left:604.6px;top:159px;width:10.4px;height:11px;background:#d4d0c8;border:1px solid #fbfbf9;border-right-color:#404040;border-bottom-color:#404040;box-sizing:border-box;"></div>
<svg style="left:604.6px;top:159px" width="10.4" height="11" viewBox="0 0 10.4 11"><path d="M3.4000000000000004 2.3000000000000003 V8.1 L6.800000000000001 5.2 Z" fill="#000"/></svg>
<div style="left:50.8px;top:171.2px;width:576.4px;height:0.8px;background:#f6f4f0"></div>
<div style="left:50.8px;top:174.2px;width:576.4px;height:1.2px;background:#5a5852"></div>
<div style="left:50.8px;top:175.4px;width:565.6px;height:280.6px;background:#d0d0d0"></div>
<div style="left:50.8px;top:175.4px;width:1.2px;height:280.6px;background:#f0f0f0"></div>
<div style="left:142px;top:175.4px;width:382.4px;height:250.6px;background:#000"></div>
<div style="left:524.4px;top:175.4px;width:1.2px;height:251.6px;background:#ededed"></div>
<div style="left:142px;top:426px;width:382.4px;height:1px;background:#e2e2e2"></div>
<svg style="left:364px;top:271px" width="12" height="12" viewBox="0 0 12 12"><circle cx="5.7" cy="5.5" r="2.6" fill="#fff"/></svg>
<div style="left:616.4px;top:175.4px;width:10.8px;height:280.6px;background:#ebe9e4"></div>
<div style="left:616.4px;top:175.6px;width:10.8px;height:10.6px;background:#d4d0c8;border:1px solid #fbfbf9;border-right-color:#404040;border-bottom-color:#404040;box-sizing:border-box;"></div>
<svg style="left:616.4px;top:175.6px" width="10.8" height="10.6" viewBox="0 0 10.8 10.6"><path d="M2.2000000000000006 6.5 H8.0 L5.1000000000000005 3.1 Z" fill="#000"/></svg>
<div style="left:616.4px;top:445px;width:10.8px;height:10.8px;background:#d4d0c8;border:1px solid #fbfbf9;border-right-color:#404040;border-bottom-color:#404040;box-sizing:border-box;"></div>
<svg style="left:616.4px;top:445px" width="10.8" height="10.8" viewBox="0 0 10.8 10.8"><path d="M2.2000000000000006 3.6000000000000005 H8.0 L5.1000000000000005 7.0 Z" fill="#000"/></svg>
<div style="left:616.4px;top:294px;width:10.8px;height:55.6px;background:#d4d0c8;border:1px solid #fbfbf9;border-right-color:#404040;border-bottom-color:#404040;box-sizing:border-box;"></div>
<div style="left:50.8px;top:456px;width:576.4px;height:11.4px;background:#ebe9e4"></div>
<div style="left:51.4px;top:456px;width:10.6px;height:11.2px;background:#d4d0c8;border:1px solid #fbfbf9;border-right-color:#404040;border-bottom-color:#404040;box-sizing:border-box;"></div>
<svg style="left:51.4px;top:456px" width="10.6" height="11.2" viewBox="0 0 10.6 11.2"><path d="M6.5 2.4 V8.2 L3.1 5.3 Z" fill="#000"/></svg>
<div style="left:222.4px;top:456px;width:220.6px;height:11.2px;background:#d4d0c8;border:1px solid #fbfbf9;border-right-color:#404040;border-bottom-color:#404040;box-sizing:border-box;"></div>
<div style="left:604.6px;top:456px;width:10.6px;height:11.2px;background:#d4d0c8;border:1px solid #fbfbf9;border-right-color:#404040;border-bottom-color:#404040;box-sizing:border-box;"></div>
<svg style="left:604.6px;top:456px" width="10.6" height="11.2" viewBox="0 0 10.6 11.2"><path d="M3.5 2.4 V8.2 L6.9 5.3 Z" fill="#000"/></svg>
<div style="left:616px;top:456px;width:11.2px;height:11.4px;background:#d4d0c8"></div>
<div style="left:50.8px;top:467.4px;width:576.4px;height:6px;background:#8c8c8c"></div>
<div style="left:50.8px;top:467.4px;width:576.4px;height:0.8px;background:#6e6e6e"></div>
<div style="left:324.6px;top:468.6px;width:29.6px;height:4px;background:#b4b4b4;border-radius:1px"></div>
<svg style="left:336.4px;top:469.2px" width="7" height="4" viewBox="0 0 7 4"><path d="M0.5 0.5 H6.5 L3.5 3.3 Z" fill="#fff"/></svg>
<div style="left:627.2px;top:284.6px;width:4.4px;height:33.8px;background:#a6a6a6;border-radius:1px"></div>
<svg style="left:627.4px;top:298.4px" width="4" height="6" viewBox="0 0 4 6"><path d="M0.8 0.2 L3.8 3 L0.8 5.8 Z" fill="#fff"/></svg>
<div style="left:50.8px;top:472.9px;width:576.4px;height:13.5px;background:linear-gradient(#b7c4e0 0%,#a8b7d8 35%,#99abd0 80%,#a3b3d5 100%)"></div>
<div style="left:50.8px;top:472.9px;width:576.4px;height:0.9px;background:#d3dbec"></div>
<div style="left:50.8px;top:485.5px;width:576.4px;height:0.9px;background:#bcc8e0"></div>
<div style="left:52.8px;top:476.0px;width:1.1px;height:7.2px;background:#8e9ec4"></div>
<div style="left:53.9px;top:476.0px;width:1px;height:7.2px;background:#b4c0dc"></div>
<div style="left:55.4px;top:476.0px;width:1.1px;height:7.2px;background:#8e9ec4"></div>
<div style="left:56.5px;top:476.0px;width:1px;height:7.2px;background:#b4c0dc"></div>
<svg style="left:61.1px;top:476.2px" width="7" height="8" viewBox="0 0 7 8"><path d="M0.2 0.2 V6.8 L4.8 3.5 Z" fill="#000"/></svg>
<div style="left:50.8px;top:486.2px;width:576.4px;height:0.8px;background:#77777f"></div>
<div style="left:50.8px;top:486.7px;width:576.4px;height:13.7px;background:linear-gradient(#b7c4e0 0%,#a8b7d8 35%,#99abd0 80%,#a3b3d5 100%)"></div>
<div style="left:50.8px;top:486.7px;width:576.4px;height:0.9px;background:#d3dbec"></div>
<div style="left:50.8px;top:499.5px;width:576.4px;height:0.9px;background:#bcc8e0"></div>
<div style="left:52.8px;top:489.8px;width:1.1px;height:7.4px;background:#8e9ec4"></div>
<div style="left:53.9px;top:489.8px;width:1px;height:7.4px;background:#b4c0dc"></div>
<div style="left:55.4px;top:489.8px;width:1.1px;height:7.4px;background:#8e9ec4"></div>
<div style="left:56.5px;top:489.8px;width:1px;height:7.4px;background:#b4c0dc"></div>
<svg style="left:59.8px;top:490.8px" width="8" height="7" viewBox="0 0 8 7"><path d="M0.1 0.6 H6.5 L3.3 5.2 Z" fill="#000"/></svg>
<svg style="left:614.0px;top:489.4px" width="10" height="8" viewBox="0 0 10 8"><path d="M0.5 1 H1.5 M2.8 1 H7.4 M0.5 3.4 H1.5 M2.8 3.4 H7.4 M0.5 5.8 H1.5 M2.8 5.8 H5.6" stroke="#18264e" stroke-width="1"/><path d="M6.2 5.6 H9.2 L7.7 7.6 Z" fill="#18264e"/></svg>
<div style="left:50.8px;top:500.2px;width:576.4px;height:77.4px;background:#d4d0c8"></div>
<div style="left:54.3px;top:504.8px;width:24.4px;height:25px;background:#fff;border:1.2px solid #3a3a3a;border-right-color:#fbfbf9;border-bottom-color:#fbfbf9;box-sizing:border-box"></div>
<svg style="left:55.4px;top:506px" width="22.4" height="23" viewBox="0 0 22.4 23"><g stroke="#c4c4c4" stroke-width="0.8"><path d="M3.2 3.6 V19.6 M7.8 3.6 V19.6 M16 3.6 V19.6 M20.2 3.6 V19.6"/></g><rect x="9.4" y="3.4" width="4.8" height="15.2" fill="#484848"/><path d="M11.8 1 V22" stroke="#2a2a2a" stroke-width="0.9"/><g fill="#b4b4b4"><circle cx="5.4" cy="16.6" r="1.1"/><circle cx="18.2" cy="16.6" r="1.1"/><circle cx="1.4" cy="16.6" r="0.8"/></g><circle cx="11.8" cy="16.6" r="1.6" fill="#fff" stroke="#444" stroke-width="0.6"/></svg>
<div style="left:96px;top:522.3px;width:69px;height:14.6px;background:#d4d0c8;border:1.8px solid #4e4c48;border-right-color:#fbfbf9;border-bottom-color:#fbfbf9;box-sizing:border-box"></div>
<div style="left:50.8px;top:541.4px;width:576.2px;height:1px;background:#8c8880"></div>
<div style="left:50.8px;top:542.4px;width:576.2px;height:1px;background:#f6f4f0"></div>
<div style="left:167.4px;top:503px;width:1.2px;height:75px;background:#807c74"></div>
<div style="left:168.6px;top:503px;width:1px;height:75px;background:#f6f4f0"></div>
<div style="left:318px;top:503px;width:1.2px;height:75px;background:#807c74"></div>
<div style="left:319.2px;top:503px;width:1px;height:75px;background:#f6f4f0"></div>
<div style="left:96px;top:545.2px;width:69px;height:13.8px;background:#d4d0c8;border:1.8px solid #4e4c48;border-right-color:#fbfbf9;border-bottom-color:#fbfbf9;box-sizing:border-box"></div>
<div style="left:153.6px;top:546.8px;width:10.2px;height:10.8px;background:#d4d0c8;border:1px solid #fbfbf9;border-right-color:#404040;border-bottom-color:#404040;box-sizing:border-box;"></div>
<svg style="left:155px;top:549.5px" width="7" height="6" viewBox="0 0 7 6"><path d="M1.5 1.9 H6.7 L4.1 5.1 Z" fill="#fff"/><path d="M0.8 1.2 H6 L3.4 4.4 Z" fill="#8c8880"/></svg>
<div style="left:205px;top:504.8px;width:67.5px;height:13.6px;background:#d4d0c8;border:1.8px solid #4e4c48;border-right-color:#fbfbf9;border-bottom-color:#fbfbf9;box-sizing:border-box"></div>
<div style="left:261.1px;top:506.4px;width:10.2px;height:10.6px;background:#d4d0c8;border:1px solid #fbfbf9;border-right-color:#404040;border-bottom-color:#404040;box-sizing:border-box;"></div>
<svg style="left:262.5px;top:509.0px" width="7" height="6" viewBox="0 0 7 6"><path d="M1.5 1.9 H6.7 L4.1 5.1 Z" fill="#fff"/><path d="M0.8 1.2 H6 L3.4 4.4 Z" fill="#8c8880"/></svg>
<div style="left:355px;top:504.7px;width:135.6px;height:13.5px;background:#d4d0c8;border:1.8px solid #4e4c48;border-right-color:#fbfbf9;border-bottom-color:#fbfbf9;box-sizing:border-box"></div>
<div style="left:479.2px;top:506.3px;width:10.2px;height:10.5px;background:#d4d0c8;border:1px solid #fbfbf9;border-right-color:#404040;border-bottom-color:#404040;box-sizing:border-box;"></div>
<svg style="left:480.6px;top:508.85px" width="7" height="6" viewBox="0 0 7 6"><path d="M1.5 1.9 H6.7 L4.1 5.1 Z" fill="#fff"/><path d="M0.8 1.2 H6 L3.4 4.4 Z" fill="#8c8880"/></svg>
<div style="left:355px;top:524.1px;width:93.8px;height:13.4px;background:#d4d0c8;border:1.8px solid #4e4c48;border-right-color:#fbfbf9;border-bottom-color:#fbfbf9;box-sizing:border-box"></div>
<div style="left:437.4px;top:525.7px;width:10.2px;height:10.4px;background:#d4d0c8;border:1px solid #fbfbf9;border-right-color:#404040;border-bottom-color:#404040;box-sizing:border-box;"></div>
<svg style="left:438.8px;top:528.2px" width="7" height="6" viewBox="0 0 7 6"><path d="M1.5 1.9 H6.7 L4.1 5.1 Z" fill="#fff"/><path d="M0.8 1.2 H6 L3.4 4.4 Z" fill="#8c8880"/></svg>
<div style="left:458px;top:523.6px;width:34.6px;height:14.4px;background:#d4d0c8;border:1px solid #fbfbf9;border-right-color:#5c5850;border-bottom-color:#5c5850;box-sizing:border-box"></div>
<div style="left:355px;top:545.4px;width:50.5px;height:13.5px;background:#d4d0c8;border:1.8px solid #4e4c48;border-right-color:#fbfbf9;border-bottom-color:#fbfbf9;box-sizing:border-box"></div>
<div style="left:394.1px;top:547.0px;width:10.2px;height:10.5px;background:#d4d0c8;border:1px solid #fbfbf9;border-right-color:#404040;border-bottom-color:#404040;box-sizing:border-box;"></div>
<svg style="left:395.5px;top:549.55px" width="7" height="6" viewBox="0 0 7 6"><path d="M1.5 1.9 H6.7 L4.1 5.1 Z" fill="#fff"/><path d="M0.8 1.2 H6 L3.4 4.4 Z" fill="#8c8880"/></svg>
<div style="left:409.3px;top:545.4px;width:52.5px;height:13.5px;background:#d4d0c8;border:1.8px solid #4e4c48;border-right-color:#fbfbf9;border-bottom-color:#fbfbf9;box-sizing:border-box"></div>
<div style="left:450.4px;top:547.0px;width:10.2px;height:10.5px;background:#d4d0c8;border:1px solid #fbfbf9;border-right-color:#404040;border-bottom-color:#404040;box-sizing:border-box;"></div>
<svg style="left:451.8px;top:549.55px" width="7" height="6" viewBox="0 0 7 6"><path d="M1.5 1.9 H6.7 L4.1 5.1 Z" fill="#fff"/><path d="M0.8 1.2 H6 L3.4 4.4 Z" fill="#8c8880"/></svg>
<div style="left:465px;top:545.4px;width:27.6px;height:13.5px;background:#d4d0c8;border:1.8px solid #4e4c48;border-right-color:#fbfbf9;border-bottom-color:#fbfbf9;box-sizing:border-box"></div>
<svg style="left:613.5px;top:501.4px" width="12" height="12" viewBox="0 0 12 12"><circle cx="5.8" cy="5.8" r="4.5" fill="#f6f6f6" stroke="#1a1a1a" stroke-width="0.9"/></svg>
<svg style="left:613.5px;top:514.2px" width="12" height="12" viewBox="0 0 12 12"><circle cx="5.8" cy="5.8" r="4.5" fill="#f6f6f6" stroke="#1a1a1a" stroke-width="0.9"/><path d="M3.8 7.8 L7.4 4.2 M4.8 3.8 H7.8 V6.8" stroke="#000" stroke-width="1.1" fill="none"/></svg>
<svg style="left:613.3px;top:543px" width="12" height="12" viewBox="0 0 12 12"><circle cx="6" cy="6" r="4.7" fill="#1e48b8" stroke="#10307a" stroke-width="0.7"/><circle cx="6" cy="3.2" r="1.1" fill="#fff"/><path d="M2.8 5 H9.2 M6 5 V7.4 M4.2 9.8 L6 7.2 L7.8 9.8" stroke="#fff" stroke-width="1.1" fill="none"/></svg>
<svg style="left:617px;top:571.8px" width="8" height="6" viewBox="0 0 8 6"><path d="M0.8 5 L4 1.4 L7.2 5 Z" fill="#fff" stroke="#111" stroke-width="0.9"/></svg>
<div style="left:632.3px;top:26.6px;width:167.7px;height:553.4px;background:#d4d0c8"></div>
<div style="left:632.3px;top:26.6px;width:0.9px;height:553.4px;background:#f2f0ec"></div>
<div style="left:632.6px;top:26.8px;width:167.4px;height:13.5px;background:linear-gradient(#b7c4e0 0%,#a8b7d8 35%,#99abd0 80%,#a3b3d5 100%)"></div>
<div style="left:632.6px;top:26.8px;width:167.4px;height:0.9px;background:#d3dbec"></div>
<div style="left:632.6px;top:39.4px;width:167.4px;height:0.9px;background:#bcc8e0"></div>
<div style="left:634.6px;top:29.9px;width:1.1px;height:7.2px;background:#8e9ec4"></div>
<div style="left:635.7px;top:29.9px;width:1px;height:7.2px;background:#b4c0dc"></div>
<div style="left:637.2px;top:29.9px;width:1.1px;height:7.2px;background:#8e9ec4"></div>
<div style="left:638.3px;top:29.9px;width:1px;height:7.2px;background:#b4c0dc"></div>
<svg style="left:641.6px;top:30.9px" width="8" height="7" viewBox="0 0 8 7"><path d="M0.1 0.6 H6.5 L3.3 5.2 Z" fill="#000"/></svg>
<svg style="left:786.8px;top:29.5px" width="10" height="8" viewBox="0 0 10 8"><path d="M0.5 1 H1.5 M2.8 1 H7.4 M0.5 3.4 H1.5 M2.8 3.4 H7.4 M0.5 5.8 H1.5 M2.8 5.8 H5.6" stroke="#18264e" stroke-width="1"/><path d="M6.2 5.6 H9.2 L7.7 7.6 Z" fill="#18264e"/></svg>
<svg style="left:630px;top:36px" width="50" height="24" viewBox="630 36 50 24"><path d="M636 48.6 L637.6 45 L641 43.6 L644.6 44 L646.6 46.6 L646 50.4 L643 52.8 L638.4 52.4 Z" fill="#7c7c7c"/><path d="M646.2 51 H649.4 L647.8 53.2 Z" fill="#4a4a4a"/><path d="M657.6 44 H659.9 V48.8 H661.8 L658.75 53 L655.7 48.8 H657.6 Z" fill="#767676"/><path d="M663.9 53 H666.2 V48.2 H668.2 L665.05 44 L661.9 48.2 H663.9 Z" fill="#767676"/><path d="M668 51 H671.2 L669.6 53.2 Z" fill="#4a4a4a"/></svg>
<div style="left:633.2px;top:54.8px;width:166.8px;height:1px;background:#b4b0a8"></div>
<div style="left:633.2px;top:55.7px;width:166.8px;height:92.5px;background:#fff"></div>
<div style="left:633.2px;top:148.2px;width:166.8px;height:16px;background:#d4d0c8"></div>
<div style="left:634px;top:149.6px;width:51.4px;height:12.6px;background:#d4d0c8;border:1px solid #fbfbf9;border-right-color:#5c5850;border-bottom-color:#5c5850;box-sizing:border-box"></div>
<svg style="left:758px;top:150.4px" width="12" height="11" viewBox="0 0 12 11"><path d="M3.4 2.6 H6 L7 4 H10.4 V9 H3.4 Z" fill="#e8e5de" stroke="#aaa69e" stroke-width="0.8"/><path d="M1 6.4 H5 M3.6 5 L5 6.4 L3.6 7.8" stroke="#aaa69e" stroke-width="0.9" fill="none"/></svg>
<svg style="left:772px;top:150.4px" width="12" height="11" viewBox="0 0 12 11"><path d="M4 2.4 H9.6 V9.4 H4 Z" fill="#e8e5de" stroke="#aaa69e" stroke-width="0.8"/><path d="M1.4 6 H6 M4.6 4.6 L6 6 L4.6 7.4" stroke="#aaa69e" stroke-width="0.9" fill="none"/></svg>
<svg style="left:786px;top:150.4px" width="12" height="11" viewBox="0 0 12 11"><path d="M3 4 H9 L8.4 9.6 H3.6 Z" fill="#e8e5de" stroke="#aaa69e" stroke-width="0.8"/><path d="M2.2 3.6 H9.8 M4.6 2.4 H7.4" stroke="#aaa69e" stroke-width="0.9"/></svg>
<div style="left:633.2px;top:163.5px;width:166.8px;height:0.8px;background:#a29e96"></div>
<div style="left:632.6px;top:164.2px;width:167.4px;height:13.1px;background:linear-gradient(#b7c4e0 0%,#a8b7d8 35%,#99abd0 80%,#a3b3d5 100%)"></div>
<div style="left:632.6px;top:164.2px;width:167.4px;height:0.9px;background:#d3dbec"></div>
<div style="left:632.6px;top:176.4px;width:167.4px;height:0.9px;background:#bcc8e0"></div>
<div style="left:634.6px;top:167.3px;width:1.1px;height:6.8px;background:#8e9ec4"></div>
<div style="left:635.7px;top:167.3px;width:1px;height:6.8px;background:#b4c0dc"></div>
<div style="left:637.2px;top:167.3px;width:1.1px;height:6.8px;background:#8e9ec4"></div>
<div style="left:638.3px;top:167.3px;width:1px;height:6.8px;background:#b4c0dc"></div>
<svg style="left:642.9px;top:167.5px" width="7" height="8" viewBox="0 0 7 8"><path d="M0.2 0.2 V6.8 L4.8 3.5 Z" fill="#000"/></svg>
<div style="left:633.2px;top:177.5px;width:166.8px;height:0.8px;background:#a29e96"></div>
<div style="left:632.6px;top:178.4px;width:167.4px;height:12.8px;background:linear-gradient(#b7c4e0 0%,#a8b7d8 35%,#99abd0 80%,#a3b3d5 100%)"></div>
<div style="left:632.6px;top:178.4px;width:167.4px;height:0.9px;background:#d3dbec"></div>
<div style="left:632.6px;top:190.3px;width:167.4px;height:0.9px;background:#bcc8e0"></div>
<div style="left:634.6px;top:181.5px;width:1.1px;height:6.5px;background:#8e9ec4"></div>
<div style="left:635.7px;top:181.5px;width:1px;height:6.5px;background:#b4c0dc"></div>
<div style="left:637.2px;top:181.5px;width:1.1px;height:6.5px;background:#8e9ec4"></div>
<div style="left:638.3px;top:181.5px;width:1px;height:6.5px;background:#b4c0dc"></div>
<svg style="left:641.6px;top:182.5px" width="8" height="7" viewBox="0 0 8 7"><path d="M0.1 0.6 H6.5 L3.3 5.2 Z" fill="#000"/></svg>
<svg style="left:786.8px;top:181.1px" width="10" height="8" viewBox="0 0 10 8"><path d="M0.5 1 H1.5 M2.8 1 H7.4 M0.5 3.4 H1.5 M2.8 3.4 H7.4 M0.5 5.8 H1.5 M2.8 5.8 H5.6" stroke="#18264e" stroke-width="1"/><path d="M6.2 5.6 H9.2 L7.7 7.6 Z" fill="#18264e"/></svg>
<svg style="left:637px;top:194.6px" width="14" height="14" viewBox="0 0 14 14"><circle cx="5.2" cy="4.8" r="3.3" fill="#3a6ad8" stroke="#1a3a90" stroke-width="0.5"/><circle cx="9.6" cy="7.2" r="3.3" fill="#38a838" stroke="#1a6a1a" stroke-width="0.5"/><circle cx="4.8" cy="9.4" r="3.1" fill="#e88820" stroke="#904a0a" stroke-width="0.5"/><circle cx="4.2" cy="3.8" r="1" fill="#cfe0ff"/></svg>
<svg style="left:778px;top:195.4px" width="13" height="13" viewBox="0 0 13 13"><path d="M6.4 1.2 L7.8 4.6 L11.2 5 L8.6 7.2 L9.4 10.4 L6.4 8.8 L3.6 10.4 L4.2 7.2 L1.6 5 L5 4.6 Z" fill="#f2da20" stroke="#7a6a10" stroke-width="0.6"/><path d="M1.8 12 L4.6 8.8 M11 12 L8.4 8.8" stroke="#1a1a1a" stroke-width="1.3"/></svg>
<div style="left:635.4px;top:225.4px;width:161.2px;height:175px;background:#d4d0c8;border:1px solid #fbfbf9;border-right-color:#77736b;border-bottom-color:#77736b;box-sizing:border-box"></div>
<div style="left:635.6px;top:212.4px;width:45.2px;height:14px;background:#d4d0c8;border:1px solid #fbfbf9;border-right:2px solid #4c4a46;border-bottom:none;border-radius:2px 2px 0 0;box-sizing:border-box"></div>
<div style="left:681.6px;top:213.8px;width:32.4px;height:11.8px;background:#d4d0c8;border:1px solid #fbfbf9;border-right:2px solid #4c4a46;border-bottom:none;border-radius:2px 2px 0 0;box-sizing:border-box"></div>
<div style="left:714.6px;top:213.8px;width:32.4px;height:11.8px;background:#d4d0c8;border:1px solid #fbfbf9;border-right:2px solid #4c4a46;border-bottom:none;border-radius:2px 2px 0 0;box-sizing:border-box"></div>
<div style="left:633.2px;top:404px;width:166.8px;height:0.8px;background:#a29e96"></div>
<div style="left:632.6px;top:404.9px;width:167.4px;height:12.9px;background:linear-gradient(#b7c4e0 0%,#a8b7d8 35%,#99abd0 80%,#a3b3d5 100%)"></div>
<div style="left:632.6px;top:404.9px;width:167.4px;height:0.9px;background:#d3dbec"></div>
<div style="left:632.6px;top:416.9px;width:167.4px;height:0.9px;background:#bcc8e0"></div>
<div style="left:634.6px;top:408.0px;width:1.1px;height:6.6px;background:#8e9ec4"></div>
<div style="left:635.7px;top:408.0px;width:1px;height:6.6px;background:#b4c0dc"></div>
<div style="left:637.2px;top:408.0px;width:1.1px;height:6.6px;background:#8e9ec4"></div>
<div style="left:638.3px;top:408.0px;width:1px;height:6.6px;background:#b4c0dc"></div>
<svg style="left:641.6px;top:409.0px" width="8" height="7" viewBox="0 0 8 7"><path d="M0.1 0.6 H6.5 L3.3 5.2 Z" fill="#000"/></svg>
<svg style="left:786.8px;top:407.6px" width="10" height="8" viewBox="0 0 10 8"><path d="M0.5 1 H1.5 M2.8 1 H7.4 M0.5 3.4 H1.5 M2.8 3.4 H7.4 M0.5 5.8 H1.5 M2.8 5.8 H5.6" stroke="#18264e" stroke-width="1"/><path d="M6.2 5.6 H9.2 L7.7 7.6 Z" fill="#18264e"/></svg>
<div style="left:633.2px;top:428.4px;width:166.8px;height:1.6px;background:#f4f2ee"></div>
<div style="left:633.2px;top:430px;width:166.8px;height:59.8px;background:#000"></div>
<div style="left:773.6px;top:433.2px;width:11px;height:10.8px;background:#e8e6e0;border:1px solid #fff;border-right-color:#8a8882;border-bottom-color:#8a8882;box-sizing:border-box"></div>
<div style="left:784.6px;top:433.2px;width:11px;height:10.8px;background:#e8e6e0;border:1px solid #fff;border-right-color:#8a8882;border-bottom-color:#8a8882;box-sizing:border-box"></div>
<svg style="left:773.6px;top:433.2px" width="11" height="10.8" viewBox="0 0 11 10.8"><rect x="3.8" y="3.8" width="2.8" height="2.8" fill="#5a5a5a"/></svg>
<svg style="left:784.6px;top:433.2px" width="11" height="10.8" viewBox="0 0 11 10.8"><path d="M3.8 2.4 V7.8 L7.2 5.1 Z" fill="#000"/></svg>
<svg style="left:712px;top:456.4px" width="9" height="9" viewBox="0 0 9 9"><circle cx="4.3" cy="4.6" r="1.9" fill="#000" stroke="#fff" stroke-width="1.2"/><path d="M4.3 1.4 V2.6 M4.3 6.6 V7.8 M1.1 4.6 H2.3 M6.3 4.6 H7.5" stroke="#fff" stroke-width="0.7"/></svg>
<div style="left:633.2px;top:489.8px;width:166.8px;height:75.4px;background:#fff"></div>
<div style="left:633.2px;top:489.8px;width:166.8px;height:4.4px;background:linear-gradient(#f6f5f2 0%,#eceae6 50%,#b8b4ac 85%,#8c8880 100%)"></div>
<div style="left:632.4px;top:493.6px;width:0.9px;height:71.6px;background:#55534e"></div>
<div style="left:633.2px;top:494.2px;width:102.2px;height:11.2px;background:#d4d0c8;border:1px solid #fbfbf9;border-right-color:#5c5850;border-bottom-color:#5c5850;box-sizing:border-box"></div>
<div style="left:735.4px;top:494.2px;width:53px;height:11.2px;background:#d4d0c8;border:1px solid #fbfbf9;border-right-color:#5c5850;border-bottom-color:#5c5850;box-sizing:border-box"></div>
<div style="left:633.2px;top:519.4px;width:155.2px;height:13.6px;border:0.8px solid #a8a6a0;box-sizing:border-box"></div>
<svg style="left:633.6px;top:507.2px" width="9.6" height="10.6" viewBox="0 0 9.6 10.6"><rect x="0.6" y="0.6" width="8.4" height="9.4" fill="#fff" stroke="#4656a4" stroke-width="1"/><circle cx="3.4" cy="3.6" r="1.4" fill="#e23030"/><rect x="5" y="4.6" width="2.4" height="2.4" fill="#3050d0"/><path d="M2 8.4 L3.3 6.2 L4.6 8.4 Z" fill="#30a040"/></svg>
<svg style="left:633.6px;top:521.0px" width="9.6" height="10.6" viewBox="0 0 9.6 10.6"><rect x="0.6" y="0.6" width="8.4" height="9.4" fill="#f4f4ff" stroke="#4656a4" stroke-width="1"/><path d="M2.4 3 H4 M2.4 5 H7 M5 7.4 H7.2" stroke="#5060c0" stroke-width="0.9"/><path d="M4.6 2.4 L6.8 3.6 L4.6 4.8 Z" fill="#5060c0"/></svg>
<svg style="left:633.6px;top:534.8px" width="9.6" height="10.6" viewBox="0 0 9.6 10.6"><rect x="0.6" y="0.6" width="8.4" height="9.4" fill="#fff" stroke="#4656a4" stroke-width="1"/><circle cx="3.4" cy="3.6" r="1.4" fill="#e23030"/><rect x="5" y="4.6" width="2.4" height="2.4" fill="#3050d0"/><path d="M2 8.4 L3.3 6.2 L4.6 8.4 Z" fill="#30a040"/></svg>
<svg style="left:633.6px;top:548.8px" width="9.6" height="10.6" viewBox="0 0 9.6 10.6"><rect x="0.6" y="0.6" width="8.4" height="9.4" fill="#fff" stroke="#4656a4" stroke-width="1"/><circle cx="3.4" cy="3.6" r="1.4" fill="#e23030"/><rect x="5" y="4.6" width="2.4" height="2.4" fill="#3050d0"/><path d="M2 8.4 L3.3 6.2 L4.6 8.4 Z" fill="#30a040"/></svg>
<div style="left:788.4px;top:494px;width:11.6px;height:69.6px;background:#ebe9e4"></div>
<div style="left:788.4px;top:494px;width:11.6px;height:11.4px;background:#d4d0c8;border:1px solid #fbfbf9;border-right-color:#404040;border-bottom-color:#404040;box-sizing:border-box;"></div>
<svg style="left:788.4px;top:494px" width="11.6" height="11.4" viewBox="0 0 11.6 11.4"><path d="M2.6 6.9 H8.4 L5.5 3.5000000000000004 Z" fill="#6a6a6a"/></svg>
<div style="left:788.4px;top:505.4px;width:11.6px;height:11.4px;background:#d4d0c8"></div>
<svg style="left:788.4px;top:505.4px" width="11.6" height="11.4" viewBox="0 0 11.6 11.4"><rect x="2.6" y="2.8" width="6.4" height="5.6" fill="#fff" stroke="#000" stroke-width="1.1"/></svg>
<div style="left:788.4px;top:516.8px;width:11.6px;height:11.4px;background:#d4d0c8"></div>
<svg style="left:788.4px;top:516.8px" width="11.6" height="11.4" viewBox="0 0 11.6 11.4"><rect x="4" y="2.2" width="3.6" height="7" fill="#fff" stroke="#000" stroke-width="1.1"/></svg>
<div style="left:788.4px;top:528.4px;width:11.6px;height:11.2px;background:#d4d0c8;border:1px solid #fbfbf9;border-right-color:#404040;border-bottom-color:#404040;box-sizing:border-box;"></div>
<svg style="left:788.4px;top:528.4px" width="11.6" height="11.2" viewBox="0 0 11.6 11.2"><path d="M2.6 6.8 H8.4 L5.5 3.4 Z" fill="#6a6a6a"/></svg>
<div style="left:788.4px;top:553px;width:11.6px;height:11px;background:#d4d0c8;border:1px solid #fbfbf9;border-right-color:#404040;border-bottom-color:#404040;box-sizing:border-box;"></div>
<svg style="left:788.4px;top:553px" width="11.6" height="11" viewBox="0 0 11.6 11"><path d="M2.6 3.7 H8.4 L5.5 7.1 Z" fill="#3a3a3a"/></svg>
<div style="left:633.2px;top:565.2px;width:166.8px;height:14.8px;background:#d4d0c8"></div>
<div style="left:788.6px;top:565.4px;width:11.4px;height:10.8px;background:#f6f5f2"></div>
<svg style="left:632.6px;top:566.4px" width="10" height="10" viewBox="0 0 10 10"><path d="M3.4 1.6 H9.4 V9.4 H3.4 Z" fill="#fff" stroke="#1a1a1a" stroke-width="0.9"/><path d="M0.8 5.6 H5.4 M3.9 4 L5.4 5.6 L3.9 7.2" stroke="#000" stroke-width="1" fill="none"/></svg>
<svg style="left:642.6px;top:566.4px" width="12" height="11" viewBox="0 0 12 11"><path d="M2.4 2.6 H5.6 L6.6 4 H10.8 V9.4 H2.4 Z" fill="#f8eca0" stroke="#1a1a1a" stroke-width="0.9"/><path d="M0.4 6.2 H4.2 M2.8 4.8 L4.2 6.2 L2.8 7.6" stroke="#000" stroke-width="0.9" fill="none"/></svg>
<svg style="left:655.4px;top:566.4px" width="9" height="10" viewBox="0 0 9 10"><circle cx="4.4" cy="5" r="3.9" fill="#16247a"/><path d="M4.6 4.4 L4.2 7.4" stroke="#fff" stroke-width="1.2"/><circle cx="4.8" cy="2.8" r="0.7" fill="#fff"/></svg>
<svg style="left:677.4px;top:566px" width="11" height="11" viewBox="0 0 11 11"><path d="M2.4 3.8 H8.6 L8 10 H3 Z" fill="#5a7cd2" stroke="#1a2a70" stroke-width="0.9"/><path d="M1.6 3.4 H9.4 M4 2.2 H7" stroke="#1a2a70" stroke-width="1"/><path d="M4.4 5 V9 M6.6 5 V9" stroke="#a8bcf0" stroke-width="0.7"/></svg>
<div style="left:688.4px;top:565.6px;width:100px;height:10.4px;background:#ebe9e4"></div>
<div style="left:688.4px;top:565.6px;width:9.6px;height:10.4px;background:#d4d0c8;border:1px solid #fbfbf9;border-right-color:#404040;border-bottom-color:#404040;box-sizing:border-box;"></div>
<svg style="left:688.4px;top:565.6px" width="9.6" height="10.4" viewBox="0 0 9.6 10.4"><path d="M6.0 2.0000000000000004 V7.800000000000001 L2.6 4.9 Z" fill="#000"/></svg>
<div style="left:698px;top:565.6px;width:30.2px;height:10.4px;background:#d4d0c8;border:1px solid #fbfbf9;border-right-color:#404040;border-bottom-color:#404040;box-sizing:border-box;"></div>
<div style="left:778.6px;top:565.6px;width:9.8px;height:10.4px;background:#d4d0c8;border:1px solid #fbfbf9;border-right-color:#404040;border-bottom-color:#404040;box-sizing:border-box;"></div>
<svg style="left:778.6px;top:565.6px" width="9.8" height="10.4" viewBox="0 0 9.8 10.4"><path d="M3.1000000000000005 2.0000000000000004 V7.800000000000001 L6.5 4.9 Z" fill="#000"/></svg>
<div style="left:0px;top:579.2px;width:800px;height:20.8px;background:#d4d0c8"></div>
<div style="left:0px;top:579.6px;width:800px;height:1px;background:#fbfbf9"></div>
<div style="left:1.6px;top:582px;width:35px;height:14.6px;background:#d4d0c8;border:1px solid #fbfbf9;border-right-color:#404040;border-bottom-color:#404040;box-sizing:border-box;box-shadow:inset -1px -1px 0 #807c74,inset 1px 1px 0 #e8e6e0;"></div>
<svg style="left:3.4px;top:583.6px" width="10.4" height="10.4" viewBox="0 0 10.4 10.4"><path d="M1 2.4 C2.4 1.4 3.6 1.6 4.8 2.4 L4.2 5.2 C3 4.4 1.8 4.4 0.4 5.2 Z" fill="#e23c20"/><path d="M5.4 2.6 C6.8 3.4 8.2 3.4 9.8 2.6 L9.2 5.4 C7.8 6.2 6.4 6.2 4.8 5.4 Z" fill="#42a230"/><path d="M0.3 5.9 C1.7 5.1 2.9 5.1 4.1 5.9 L3.5 8.7 C2.3 7.9 1.1 7.9 -0.2 8.7 Z" fill="#2a62d2"/><path d="M4.7 6.1 C6.1 6.9 7.5 6.9 9.1 6.1 L8.5 8.9 C7.1 9.7 5.7 9.7 4.1 8.9 Z" fill="#f2c220"/></svg>
<div style="left:42.2px;top:582.8px;width:1px;height:13px;background:#8c8880"></div>
<div style="left:43.2px;top:582.8px;width:1px;height:13px;background:#fbfbf9"></div>
<svg style="left:48.3px;top:584.4px" width="12" height="11" viewBox="0 0 12 11"><rect x="0.7" y="0.7" width="10.6" height="9.8" fill="#fbe4b0" stroke="#e09a34" stroke-width="1.3"/><circle cx="6" cy="5.6" r="3" fill="#fffaf0" stroke="#d8983a" stroke-width="0.9"/><path d="M5.2 4.2 V7 L7.4 5.6 Z" fill="#d8983a"/></svg>
<svg style="left:64px;top:583.8px" width="12" height="12" viewBox="0 0 12 12"><circle cx="6" cy="6" r="5.2" fill="#f0e0dc" stroke="#b82828" stroke-width="0.9"/><path d="M2 6.4 A4 4 0 0 1 10 6.4 Z" fill="#8a1818"/><path d="M2 6.4 A4 4 0 0 0 10 6.4 Z" fill="#f29a20"/><path d="M3.6 6.4 A2.4 2.4 0 0 1 8.4 6.4 Z" fill="#e03a20"/></svg>
<svg style="left:81px;top:584px" width="12" height="12" viewBox="0 0 12 12"><circle cx="5.8" cy="5.6" r="4.2" fill="#e4f0fc" stroke="#2a7ad8" stroke-width="2.2"/><path d="M6.6 7 L9.4 10.8" stroke="#2a7ad8" stroke-width="2.2"/></svg>
<svg style="left:96px;top:583.8px" width="13" height="12" viewBox="0 0 13 12"><circle cx="6.4" cy="6.2" r="4.2" fill="#eaf6ff" stroke="#2a84e4" stroke-width="2"/><path d="M3 6.2 H10" stroke="#2a84e4" stroke-width="1.7"/><path d="M0.8 9.2 C4 2.4 10 1 12.4 3" stroke="#5aaaf2" stroke-width="1" fill="none"/></svg>
<div style="left:136.6px;top:582.8px;width:1px;height:13px;background:#8c8880"></div>
<div style="left:137.6px;top:582.8px;width:1px;height:13px;background:#fbfbf9"></div>
<div style="left:140.6px;top:581.8px;width:110px;height:15px;background:#d4d0c8;border:1px solid #fbfbf9;border-right-color:#404040;border-bottom-color:#404040;box-sizing:border-box;box-shadow:inset -1px -1px 0 #807c74;"></div>
<svg style="left:143.4px;top:584.2px" width="12" height="11" viewBox="0 0 12 11"><rect x="0.7" y="0.7" width="10.6" height="9.8" fill="#fbe4b0" stroke="#e09a34" stroke-width="1.3"/><circle cx="6" cy="5.6" r="3" fill="#fffaf0" stroke="#d8983a" stroke-width="0.9"/><path d="M5.2 4.2 V7 L7.4 5.6 Z" fill="#d8983a"/></svg>
<div style="left:253.6px;top:581.8px;width:110.4px;height:15px;background:#d4d0c8;border:1px solid #fbfbf9;border-right-color:#404040;border-bottom-color:#404040;box-sizing:border-box;box-shadow:inset -1px -1px 0 #807c74;"></div>
<svg style="left:256.4px;top:584.2px" width="12" height="11" viewBox="0 0 12 11"><path d="M1 2.6 H4.6 L5.6 4 H11 V9.8 H1 Z" fill="#f8e080" stroke="#8a6a10" stroke-width="0.8"/><path d="M1 9.8 L2.6 5.4 H12 L11 9.8 Z" fill="#fcf0a8" stroke="#8a6a10" stroke-width="0.7"/></svg>
<div style="left:366.6px;top:581.8px;width:110.4px;height:15px;background:#d4d0c8;border:1px solid #fbfbf9;border-right-color:#404040;border-bottom-color:#404040;box-sizing:border-box;box-shadow:inset -1px -1px 0 #807c74;"></div>
<svg style="left:369.4px;top:584.2px" width="12" height="11" viewBox="0 0 12 11"><rect x="1.2" y="0.6" width="9.6" height="9.8" fill="#fff" stroke="#3a5ab0" stroke-width="0.9"/><path d="M3 3.6 L4.4 8 L6 4.6 L7.6 8 L9 3.6" stroke="#2a4aa8" stroke-width="1.1" fill="none"/></svg>
<div style="left:480.4px;top:581.8px;width:110.2px;height:15px;background:#f4f3f0;border:1px solid #404040;border-right-color:#fbfbf9;border-bottom-color:#fbfbf9;box-shadow:inset 1px 1px 0 #807c74;box-sizing:border-box"></div>
<svg style="left:483.6px;top:584.6px" width="12" height="12" viewBox="0 0 12 12"><circle cx="5.8" cy="5.6" r="5.4" fill="#c8281e"/><path d="M4.4 9 C4.4 5.4 5.4 3.4 8.4 2.8 M4.2 6.2 H7" stroke="#300" stroke-width="1.2" fill="none"/></svg>
<div style="left:702px;top:582.8px;width:1px;height:13px;background:#8c8880"></div>
<div style="left:703px;top:582.8px;width:1px;height:13px;background:#fbfbf9"></div>
<div style="left:709px;top:584.6px;width:8.8px;height:11px;background:#0c1e78"></div>
<div style="left:720.4px;top:581.8px;width:79.2px;height:15.6px;border:1px solid #8c8880;border-right-color:#fbfbf9;border-bottom-color:#fbfbf9;box-sizing:border-box"></div>
<div style="left:733px;top:584.8px;width:11.6px;height:10.8px;background:#1428c8"></div>
<svg style="left:733px;top:584.8px" width="11.6" height="10.8" viewBox="0 0 11.6 10.8"><path d="M3.6 2.2 V8.6 L8.8 5.4 Z" fill="#fff"/></svg>
<svg style="left:745.2px;top:584.4px" width="12" height="11" viewBox="0 0 12 11"><rect x="3.6" y="1" width="6" height="5" fill="#3c4c9c" stroke="#1a2460" stroke-width="0.8"/><rect x="1" y="4.4" width="6" height="5" fill="#4a5cb0" stroke="#1a2460" stroke-width="0.8"/><path d="M2 10.4 H6.4" stroke="#1a2460" stroke-width="1"/></svg>
<svg style="left:757.6px;top:584.4px" width="12" height="11.4" viewBox="0 0 12 11.4"><rect x="0.7" y="0.7" width="10.4" height="10" fill="#f4e4f4" stroke="#7c3c8c" stroke-width="1.1"/><path d="M3.4 9 C4 4 4.6 2.8 6 3.4 C7.4 4.2 5.4 6 4.6 6 C6.4 6 7.2 8.6 8.4 8.4" stroke="#6a2a7a" stroke-width="1" fill="none"/></svg>
<svg id="tx" style="left:0;top:0" width="800" height="600" viewBox="0 0 800 600">
<text x="13.55" y="9" font-size="8.0" fill="#fff" stroke="#fff" stroke-width="0.36" font-weight="bold" textLength="155.7" lengthAdjust="spacingAndGlyphs">Macromedia Flash MX Professional 2004</text>
<text x="170.72" y="9" font-size="8.0" fill="#fff" stroke="#fff" stroke-width="0.36" font-weight="bold" textLength="4.0" lengthAdjust="spacingAndGlyphs">-</text>
<text x="177.09" y="9" font-size="8.0" fill="#fff" stroke="#fff" stroke-width="0.36" font-weight="bold" textLength="59.4" lengthAdjust="spacingAndGlyphs">[исходник-2*]</text>
<text x="3.47" y="22" font-size="7.8" fill="#000" stroke="#000" stroke-width="0.36" textLength="11.9" lengthAdjust="spacingAndGlyphs">File</text>
<text x="22.55" y="22" font-size="7.8" fill="#000" stroke="#000" stroke-width="0.36" textLength="13.4" lengthAdjust="spacingAndGlyphs">Edit</text>
<text x="43.78" y="22" font-size="7.8" fill="#000" stroke="#000" stroke-width="0.36" textLength="15.8" lengthAdjust="spacingAndGlyphs">View</text>
<text x="67.53" y="22" font-size="7.8" fill="#000" stroke="#000" stroke-width="0.36" textLength="20.4" lengthAdjust="spacingAndGlyphs">Insert</text>
<text x="95.66" y="22" font-size="7.8" fill="#000" stroke="#000" stroke-width="0.36" textLength="22.7" lengthAdjust="spacingAndGlyphs">Modify</text>
<text x="126.52" y="22" font-size="7.8" fill="#000" stroke="#000" stroke-width="0.36" textLength="15.4" lengthAdjust="spacingAndGlyphs">Text</text>
<text x="149.58" y="22" font-size="7.8" fill="#000" stroke="#000" stroke-width="0.36" textLength="37.2" lengthAdjust="spacingAndGlyphs">Commands</text>
<text x="194.55" y="22" font-size="7.8" fill="#000" stroke="#000" stroke-width="0.36" textLength="25.2" lengthAdjust="spacingAndGlyphs">Control</text>
<text x="227.16" y="22" font-size="7.8" fill="#000" stroke="#000" stroke-width="0.36" textLength="27.2" lengthAdjust="spacingAndGlyphs">Window</text>
<text x="261.56" y="22" font-size="7.8" fill="#000" stroke="#000" stroke-width="0.36" textLength="15.8" lengthAdjust="spacingAndGlyphs">Help</text>
<text x="13.57" y="42" font-size="7.8" fill="#000" stroke="#000" stroke-width="0.36" textLength="17.2" lengthAdjust="spacingAndGlyphs">Tools</text>
<text x="25.64" y="95" font-size="13.5" fill="#0a0a0a" stroke="#0a0a0a" stroke-width="0.9" textLength="9.3" lengthAdjust="spacingAndGlyphs">A</text>
<text x="14.49" y="201" font-size="7.8" fill="#000" stroke="#000" stroke-width="0.36" textLength="15.3" lengthAdjust="spacingAndGlyphs">View</text>
<text x="11.79" y="232" font-size="7.8" fill="#000" stroke="#000" stroke-width="0.36" textLength="20.6" lengthAdjust="spacingAndGlyphs">Colors</text>
<text x="9.58" y="304" font-size="7.8" fill="#000" stroke="#000" stroke-width="0.36" textLength="24.8" lengthAdjust="spacingAndGlyphs">Options</text>
<text x="56.53" y="44" font-size="7.8" fill="#000" stroke="#000" stroke-width="0.36" textLength="45.0" lengthAdjust="spacingAndGlyphs">исходник-2*</text>
<text x="93.18" y="61" font-size="7.8" fill="#000" stroke="#000" stroke-width="0.36" textLength="26.6" lengthAdjust="spacingAndGlyphs">Scene 1</text>
<text x="566.79" y="60" font-size="7.4" fill="#fff" stroke="#fff" stroke-width="0.36" textLength="17.2" lengthAdjust="spacingAndGlyphs">100%</text>
<text x="69.39" y="78" font-size="7.8" fill="#000" stroke="#000" stroke-width="0.36" textLength="26.4" lengthAdjust="spacingAndGlyphs">Timeline</text>
<text x="76.85" y="110" font-size="7.8" fill="#000" stroke="#000" stroke-width="0.36" textLength="25.8" lengthAdjust="spacingAndGlyphs">Layer 1</text>
<text x="76.85" y="123" font-size="7.8" fill="#fff" stroke="#fff" stroke-width="0.36" textLength="25.8" lengthAdjust="spacingAndGlyphs">Layer 2</text>
<text x="174.65" y="94" font-size="6.3" fill="#000" stroke="#000" stroke-width="0.3" textLength="3.5" lengthAdjust="spacingAndGlyphs">1</text>
<text x="196.87" y="94" font-size="6.3" fill="#000" stroke="#000" stroke-width="0.3" textLength="3.5" lengthAdjust="spacingAndGlyphs">5</text>
<text x="224.65" y="94" font-size="6.3" fill="#000" stroke="#000" stroke-width="0.3" textLength="7.01" lengthAdjust="spacingAndGlyphs">10</text>
<text x="252.43" y="94" font-size="6.3" fill="#000" stroke="#000" stroke-width="0.3" textLength="7.01" lengthAdjust="spacingAndGlyphs">15</text>
<text x="280.21" y="94" font-size="6.3" fill="#000" stroke="#000" stroke-width="0.3" textLength="7.01" lengthAdjust="spacingAndGlyphs">20</text>
<text x="307.98" y="94" font-size="6.3" fill="#000" stroke="#000" stroke-width="0.3" textLength="7.01" lengthAdjust="spacingAndGlyphs">25</text>
<text x="335.76" y="94" font-size="6.3" fill="#000" stroke="#000" stroke-width="0.3" textLength="7.01" lengthAdjust="spacingAndGlyphs">30</text>
<text x="363.54" y="94" font-size="6.3" fill="#000" stroke="#000" stroke-width="0.3" textLength="7.01" lengthAdjust="spacingAndGlyphs">35</text>
<text x="391.32" y="94" font-size="6.3" fill="#000" stroke="#000" stroke-width="0.3" textLength="7.01" lengthAdjust="spacingAndGlyphs">40</text>
<text x="419.1" y="94" font-size="6.3" fill="#000" stroke="#000" stroke-width="0.3" textLength="7.01" lengthAdjust="spacingAndGlyphs">45</text>
<text x="446.87" y="94" font-size="6.3" fill="#000" stroke="#000" stroke-width="0.3" textLength="7.01" lengthAdjust="spacingAndGlyphs">50</text>
<text x="474.65" y="94" font-size="6.3" fill="#000" stroke="#000" stroke-width="0.3" textLength="7.01" lengthAdjust="spacingAndGlyphs">55</text>
<text x="502.43" y="94" font-size="6.3" fill="#000" stroke="#000" stroke-width="0.3" textLength="7.01" lengthAdjust="spacingAndGlyphs">60</text>
<text x="530.21" y="94" font-size="6.3" fill="#000" stroke="#000" stroke-width="0.3" textLength="7.01" lengthAdjust="spacingAndGlyphs">65</text>
<text x="557.99" y="94" font-size="6.3" fill="#000" stroke="#000" stroke-width="0.3" textLength="7.01" lengthAdjust="spacingAndGlyphs">70</text>
<text x="585.76" y="94" font-size="6.3" fill="#000" stroke="#000" stroke-width="0.3" textLength="7.01" lengthAdjust="spacingAndGlyphs">75</text>
<text x="247.18" y="167" font-size="7.4" fill="#000" stroke="#000" stroke-width="0.36" textLength="7.6" lengthAdjust="spacingAndGlyphs">43</text>
<text x="265.31" y="167" font-size="7.4" fill="#000" stroke="#000" stroke-width="0.36" textLength="23.1" lengthAdjust="spacingAndGlyphs">12.0 fps</text>
<text x="299.3" y="167" font-size="7.4" fill="#000" stroke="#000" stroke-width="0.36" textLength="12.5" lengthAdjust="spacingAndGlyphs">3.5s</text>
<text x="68.57" y="482" font-size="7.8" fill="#000" stroke="#000" stroke-width="0.36" textLength="52.8" lengthAdjust="spacingAndGlyphs">Actions - Frame</text>
<text x="68.56" y="496" font-size="7.8" fill="#000" stroke="#000" stroke-width="0.36" textLength="34.8" lengthAdjust="spacingAndGlyphs">Properties</text>
<text x="91.26" y="517" font-size="7.8" fill="#000" stroke="#000" stroke-width="0.36" textLength="22.1" lengthAdjust="spacingAndGlyphs">Frame</text>
<text x="55.14" y="556" font-size="7.8" fill="#000" stroke="#000" stroke-width="0.36" textLength="38.8" lengthAdjust="spacingAndGlyphs">Label type:</text>
<text x="98.39" y="555" font-size="7.8" fill="#8c8880" stroke="#8c8880" stroke-width="0.36" textLength="19.0" lengthAdjust="spacingAndGlyphs">Name</text>
<text x="175.58" y="516" font-size="7.8" fill="#000" stroke="#000" stroke-width="0.36" textLength="23.4" lengthAdjust="spacingAndGlyphs">Tween:</text>
<text x="206.98" y="515" font-size="7.8" fill="#8c8880" stroke="#8c8880" stroke-width="0.36" textLength="17.6" lengthAdjust="spacingAndGlyphs">None</text>
<text x="322.07" y="515" font-size="7.8" fill="#000" stroke="#000" stroke-width="0.36" textLength="23.8" lengthAdjust="spacingAndGlyphs">Sound:</text>
<text x="357.07" y="515" font-size="7.8" fill="#8c8880" stroke="#8c8880" stroke-width="0.36" textLength="17.8" lengthAdjust="spacingAndGlyphs">None</text>
<text x="322.02" y="534" font-size="7.8" fill="#000" stroke="#000" stroke-width="0.36" textLength="23.6" lengthAdjust="spacingAndGlyphs">Effect:</text>
<text x="357.07" y="534" font-size="7.8" fill="#8c8880" stroke="#8c8880" stroke-width="0.36" textLength="17.8" lengthAdjust="spacingAndGlyphs">None</text>
<text x="465.2" y="534.7" font-size="7.8" fill="#fff" textLength="22.0" lengthAdjust="spacingAndGlyphs">Edit...</text>
<text x="464.5" y="534" font-size="7.8" fill="#8c8880" stroke="#8c8880" stroke-width="0.36" textLength="22.0" lengthAdjust="spacingAndGlyphs">Edit...</text>
<text x="322.05" y="556" font-size="7.8" fill="#000" stroke="#000" stroke-width="0.36" textLength="19.5" lengthAdjust="spacingAndGlyphs">Sync:</text>
<text x="357.06" y="556" font-size="7.8" fill="#8c8880" stroke="#8c8880" stroke-width="0.36" textLength="19.5" lengthAdjust="spacingAndGlyphs">Event</text>
<text x="411.97" y="556" font-size="7.8" fill="#8c8880" stroke="#8c8880" stroke-width="0.36" textLength="23.9" lengthAdjust="spacingAndGlyphs">Repeat</text>
<text x="468.01" y="556" font-size="7.8" fill="#8c8880" stroke="#8c8880" stroke-width="0.36" textLength="3.8" lengthAdjust="spacingAndGlyphs">1</text>
<text x="355.27" y="573" font-size="7.8" fill="#000" stroke="#000" stroke-width="0.36" textLength="64.5" lengthAdjust="spacingAndGlyphs">No sound selected.</text>
<text x="616.67" y="510" font-size="7.2" fill="#000" stroke="#000" stroke-width="0.36" font-weight="bold" textLength="5.2" lengthAdjust="spacingAndGlyphs">?</text>
<text x="649.74" y="36" font-size="7.8" fill="#000" stroke="#000" stroke-width="0.36" textLength="24.6" lengthAdjust="spacingAndGlyphs">Project</text>
<text x="641.96" y="71" font-size="7.8" fill="#000" stroke="#000" stroke-width="0.36" textLength="93.6" lengthAdjust="spacingAndGlyphs">To work with Flash Projects:</text>
<text x="641.95" y="85" font-size="7.8" fill="#000" stroke="#000" stroke-width="0.36" textLength="92.2" lengthAdjust="spacingAndGlyphs">1. Create a <tspan class="lk">new project</tspan>, or</text>
<text x="641.96" y="99" font-size="7.8" fill="#000" stroke="#000" stroke-width="0.36" textLength="93.6" lengthAdjust="spacingAndGlyphs">2. <tspan class="lk">Open</tspan> an existing project.</text>
<text x="638.85" y="158.7" font-size="7.8" fill="#fff" textLength="41.2" lengthAdjust="spacingAndGlyphs">Test Project</text>
<text x="638.15" y="158" font-size="7.8" fill="#8c8880" stroke="#8c8880" stroke-width="0.36" textLength="41.2" lengthAdjust="spacingAndGlyphs">Test Project</text>
<text x="650.07" y="174" font-size="7.8" fill="#000" stroke="#000" stroke-width="0.36" textLength="42.3" lengthAdjust="spacingAndGlyphs">Components</text>
<text x="650.06" y="188" font-size="7.8" fill="#000" stroke="#000" stroke-width="0.36" textLength="72.7" lengthAdjust="spacingAndGlyphs">Component Inspector</text>
<text x="655.49" y="204" font-size="7.8" fill="#000" stroke="#000" stroke-width="0.36" textLength="8.8" lengthAdjust="spacingAndGlyphs">---</text>
<text x="640.31" y="222" font-size="7.8" fill="#000" stroke="#000" stroke-width="0.36" textLength="34.8" lengthAdjust="spacingAndGlyphs">Parameters</text>
<text x="683.0" y="223" font-size="7.8" fill="#000" stroke="#000" stroke-width="0.36" textLength="26.7" lengthAdjust="spacingAndGlyphs">Bindings</text>
<text x="717.2" y="223" font-size="7.8" fill="#000" stroke="#000" stroke-width="0.36" textLength="25.2" lengthAdjust="spacingAndGlyphs">Schema</text>
<text x="643.17" y="239" font-size="7.8" fill="#000" stroke="#000" stroke-width="0.36" textLength="130.2" lengthAdjust="spacingAndGlyphs">Select a Component instance to edit its</text>
<text x="643.17" y="249" font-size="7.8" fill="#000" stroke="#000" stroke-width="0.36" textLength="128.4" lengthAdjust="spacingAndGlyphs">parameters, bindings or schema in this</text>
<text x="643.18" y="258" font-size="7.8" fill="#000" stroke="#000" stroke-width="0.36" textLength="20.0" lengthAdjust="spacingAndGlyphs">panel.</text>
<text x="649.75" y="415" font-size="7.8" fill="#000" stroke="#000" stroke-width="0.36" textLength="70.9" lengthAdjust="spacingAndGlyphs">Library - исходник-2</text>
<text x="634.37" y="426" font-size="7.8" fill="#000" stroke="#000" stroke-width="0.36" textLength="24.3" lengthAdjust="spacingAndGlyphs">4 items</text>
<text x="634.4" y="502" font-size="7.8" fill="#000" stroke="#000" stroke-width="0.36" textLength="18.4" lengthAdjust="spacingAndGlyphs">Name</text>
<text x="737.99" y="502" font-size="7.8" fill="#000" stroke="#000" stroke-width="0.36" textLength="14.2" lengthAdjust="spacingAndGlyphs">Kind</text>
<text x="648.76" y="515" font-size="7.8" fill="#000" stroke="#000" stroke-width="0.36" textLength="33.6" lengthAdjust="spacingAndGlyphs">firecolor-1</text>
<text x="741.18" y="515" font-size="7.8" fill="#000" stroke="#000" stroke-width="0.36" textLength="25.2" lengthAdjust="spacingAndGlyphs">Graphic</text>
<text x="648.76" y="529" font-size="7.8" fill="#000" stroke="#000" stroke-width="0.36" textLength="30.5" lengthAdjust="spacingAndGlyphs">fireworks</text>
<text x="741.18" y="529" font-size="7.8" fill="#000" stroke="#000" stroke-width="0.36" textLength="34.2" lengthAdjust="spacingAndGlyphs">Movie Clip</text>
<text x="648.73" y="543" font-size="7.8" fill="#000" stroke="#000" stroke-width="0.36" textLength="19.8" lengthAdjust="spacingAndGlyphs">trajec</text>
<text x="741.18" y="543" font-size="7.8" fill="#000" stroke="#000" stroke-width="0.36" textLength="25.2" lengthAdjust="spacingAndGlyphs">Graphic</text>
<text x="648.75" y="557" font-size="7.8" fill="#000" stroke="#000" stroke-width="0.36" textLength="18.4" lengthAdjust="spacingAndGlyphs">white</text>
<text x="741.18" y="557" font-size="7.8" fill="#000" stroke="#000" stroke-width="0.36" textLength="25.2" lengthAdjust="spacingAndGlyphs">Graphic</text>
<text x="15.02" y="592" font-size="8.0" fill="#000" stroke="#000" stroke-width="0.36" font-weight="bold" textLength="19.6" lengthAdjust="spacingAndGlyphs">Пуск</text>
<text x="124.99" y="589" font-size="8.2" fill="#000" stroke="#000" stroke-width="0.36" font-weight="bold" textLength="6.2" lengthAdjust="spacingAndGlyphs">»</text>
<text x="156.55" y="592" font-size="7.8" fill="#000" stroke="#000" stroke-width="0.36" textLength="89.4" lengthAdjust="spacingAndGlyphs">Входящие - Microsoft O...</text>
<text x="269.57" y="592" font-size="7.8" fill="#000" stroke="#000" stroke-width="0.36" textLength="48.4" lengthAdjust="spacingAndGlyphs">My Downloads</text>
<text x="382.55" y="592" font-size="7.8" fill="#000" stroke="#000" stroke-width="0.36" textLength="89.4" lengthAdjust="spacingAndGlyphs">ФейерверкАП-новый - ...</text>
<text x="496.53" y="593" font-size="7.8" fill="#000" stroke="#000" stroke-width="0.36" font-weight="bold" textLength="91.8" lengthAdjust="spacingAndGlyphs">Macromedia Flash MX...</text>
<text x="708.89" y="593" font-size="7.2" fill="#fff" stroke="#fff" stroke-width="0.2" font-weight="bold" textLength="9.1" lengthAdjust="spacingAndGlyphs">EN</text>
<text x="722.96" y="592" font-size="8.6" fill="#000" stroke="#000" stroke-width="0.36" font-weight="bold" textLength="6.8" lengthAdjust="spacingAndGlyphs">«</text>
<text x="773.54" y="592" font-size="7.8" fill="#000" stroke="#000" stroke-width="0.36" textLength="20.0" lengthAdjust="spacingAndGlyphs">15:08</text>
</svg>
</div></body></html>
